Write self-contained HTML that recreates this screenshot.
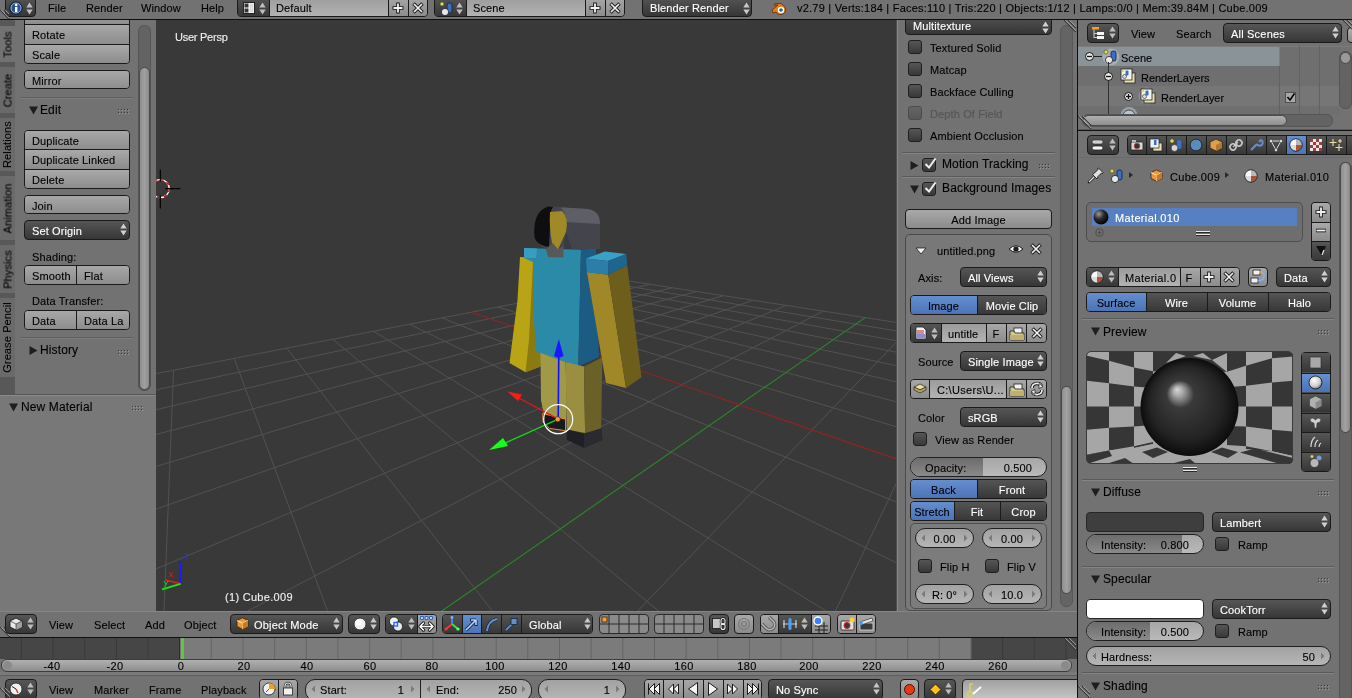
<!DOCTYPE html><html><head><meta charset="utf-8"><style>
*{margin:0;padding:0}
html,body{width:1352px;height:698px;overflow:hidden;background:#727272}
.a{position:absolute;box-sizing:border-box}
.t{position:absolute;font-family:"Liberation Sans",sans-serif;font-size:11px;line-height:11px;white-space:nowrap;-webkit-text-stroke:0.12px currentColor;will-change:transform;letter-spacing:0.12px}
svg{overflow:visible}
</style></head><body><div class="a" style="left:0;top:0;width:1352px;height:698px;clip-path:inset(20px 1196px 87px 0px)">
<div class="a" style="left:0px;top:20px;width:15px;height:375px;background:#585858"></div>
<div class="a" style="left:0px;top:26px;width:15px;height:36px;background:#727272;"></div>
<span class="t" style="left:-10.5px;top:38.5px;width:36px;text-align:center;transform:rotate(-90deg);color:#000">Tools</span>
<div class="a" style="left:0px;top:67px;width:15px;height:46px;background:#6a6a6a;"></div>
<span class="t" style="left:-15.5px;top:84.5px;width:46px;text-align:center;transform:rotate(-90deg);color:#000">Create</span>
<div class="a" style="left:0px;top:118px;width:15px;height:53px;background:#6a6a6a;"></div>
<span class="t" style="left:-19.0px;top:139.0px;width:53px;text-align:center;transform:rotate(-90deg);color:#000">Relations</span>
<div class="a" style="left:0px;top:176px;width:15px;height:64px;background:#6a6a6a;"></div>
<span class="t" style="left:-24.5px;top:202.5px;width:64px;text-align:center;transform:rotate(-90deg);color:#000">Animation</span>
<div class="a" style="left:0px;top:245px;width:15px;height:48px;background:#6a6a6a;"></div>
<span class="t" style="left:-16.5px;top:263.5px;width:48px;text-align:center;transform:rotate(-90deg);color:#000">Physics</span>
<div class="a" style="left:0px;top:298px;width:15px;height:79px;background:#6a6a6a;"></div>
<span class="t" style="left:-32.0px;top:332.0px;width:79px;text-align:center;transform:rotate(-90deg);color:#000">Grease Pencil</span>
<div class="a" style="left:15px;top:20px;width:141px;height:375px;background:#727272"></div>
<div class="a w" style="left:24px;top:14px;width:106px;height:11px;background:linear-gradient(#a9a9a9,#8b8b8b);border:1px solid #1a1a1a;border-radius:0px;border-top:none;"></div>
<div class="a w" style="left:24px;top:24px;width:106px;height:40px;border:1px solid #1a1a1a;border-radius:0 0 4px 4px;overflow:hidden;"><div class="a" style="left:-1px;top:-1px;width:106px;height:21px;background:linear-gradient(#a9a9a9,#8b8b8b);"></div><div class="a" style="left:-1px;top:19px;width:106px;height:20px;background:linear-gradient(#a9a9a9,#8b8b8b);border-top:1px solid #1a1a1a;"></div></div>
<span class="t" style="left:32px;top:30.0px;color:#000;font-size:11px;">Rotate</span>
<span class="t" style="left:32px;top:50.0px;color:#000;font-size:11px;">Scale</span>
<div class="a w" style="left:24px;top:70px;width:106px;height:19px;border:1px solid #1a1a1a;border-radius:4px 4px 4px 4px;overflow:hidden;"><div class="a" style="left:-1px;top:-1px;width:106px;height:20px;background:linear-gradient(#a9a9a9,#8b8b8b);"></div></div>
<span class="t" style="left:32px;top:75.5px;color:#000;font-size:11px;">Mirror</span>
<div class="a" style="left:21px;top:97px;width:112px;height:1px;background:#5e5e5e"></div>
<div class="a" style="left:21px;top:98px;width:112px;height:1px;background:#7c7c7c"></div>
<svg class="a" style="left:28.5px;top:105.5px;" width="9" height="9" viewBox="0 0 9 9"><path d="M0 0.5L9 0.5L4.5 8.5Z" fill="#1e1e1e"/></svg>
<span class="t" style="left:40px;top:105px;color:#000;font-size:12px;">Edit</span>
<svg class="a" style="left:118px;top:109px;" width="12" height="6" viewBox="0 0 12 6"><rect x="0" y="0" width="1" height="1" fill="#3a3a3a"/><rect x="1" y="1" width="1" height="1" fill="#9a9a9a"/><rect x="0" y="3" width="1" height="1" fill="#3a3a3a"/><rect x="1" y="4" width="1" height="1" fill="#9a9a9a"/><rect x="3" y="0" width="1" height="1" fill="#3a3a3a"/><rect x="4" y="1" width="1" height="1" fill="#9a9a9a"/><rect x="3" y="3" width="1" height="1" fill="#3a3a3a"/><rect x="4" y="4" width="1" height="1" fill="#9a9a9a"/><rect x="6" y="0" width="1" height="1" fill="#3a3a3a"/><rect x="7" y="1" width="1" height="1" fill="#9a9a9a"/><rect x="6" y="3" width="1" height="1" fill="#3a3a3a"/><rect x="7" y="4" width="1" height="1" fill="#9a9a9a"/><rect x="9" y="0" width="1" height="1" fill="#3a3a3a"/><rect x="10" y="1" width="1" height="1" fill="#9a9a9a"/><rect x="9" y="3" width="1" height="1" fill="#3a3a3a"/><rect x="10" y="4" width="1" height="1" fill="#9a9a9a"/></svg>
<div class="a w" style="left:24px;top:130px;width:106px;height:59px;border:1px solid #1a1a1a;border-radius:4px 4px 4px 4px;overflow:hidden;"><div class="a" style="left:-1px;top:-1px;width:106px;height:20px;background:linear-gradient(#a9a9a9,#8b8b8b);"></div><div class="a" style="left:-1px;top:18px;width:106px;height:20px;background:linear-gradient(#a9a9a9,#8b8b8b);border-top:1px solid #1a1a1a;"></div><div class="a" style="left:-1px;top:38px;width:106px;height:20px;background:linear-gradient(#a9a9a9,#8b8b8b);border-top:1px solid #1a1a1a;"></div></div>
<span class="t" style="left:32px;top:135.5px;color:#000;font-size:11px;">Duplicate</span>
<span class="t" style="left:32px;top:155.0px;color:#000;font-size:11px;">Duplicate Linked</span>
<span class="t" style="left:32px;top:175.0px;color:#000;font-size:11px;">Delete</span>
<div class="a w" style="left:24px;top:195px;width:106px;height:19px;border:1px solid #1a1a1a;border-radius:4px 4px 4px 4px;overflow:hidden;"><div class="a" style="left:-1px;top:-1px;width:106px;height:20px;background:linear-gradient(#a9a9a9,#8b8b8b);"></div></div>
<span class="t" style="left:32px;top:200.5px;color:#000;font-size:11px;">Join</span>
<div class="a w" style="left:24px;top:220px;width:106px;height:20px;background:linear-gradient(#565656,#363636);border:1px solid #1a1a1a;border-radius:4px;"></div>
<span class="t" style="left:32px;top:226px;color:#fff;font-size:11px;">Set Origin</span>
<svg class="a" style="left:120px;top:223px" width="7" height="14"><path d="M0.3 5.6L3.5 0.4L6.7 5.6Z M0.3 7.4L3.5 12.6L6.7 7.4Z" fill="#d0d0d0"/></svg>
<span class="t" style="left:32px;top:252px;color:#000;font-size:11px;">Shading:</span>
<div class="a w" style="left:24px;top:265px;width:106px;height:20px;border:1px solid #1a1a1a;border-radius:4px;overflow:hidden;"><div class="a" style="left:-1px;top:-1px;width:53px;height:20px;background:linear-gradient(#a9a9a9,#8b8b8b);box-sizing:border-box"></div><div class="a" style="left:51px;top:-1px;width:54px;height:20px;background:linear-gradient(#a9a9a9,#8b8b8b);border-left:1px solid #1a1a1a;box-sizing:border-box"></div></div>
<span class="t" style="left:32px;top:271px;color:#000;font-size:11px;">Smooth</span>
<span class="t" style="left:84px;top:271px;color:#000;font-size:11px;">Flat</span>
<span class="t" style="left:32px;top:296px;color:#000;font-size:11px;">Data Transfer:</span>
<div class="a w" style="left:24px;top:310px;width:106px;height:20px;border:1px solid #1a1a1a;border-radius:4px;overflow:hidden;"><div class="a" style="left:-1px;top:-1px;width:53px;height:20px;background:linear-gradient(#a9a9a9,#8b8b8b);box-sizing:border-box"></div><div class="a" style="left:51px;top:-1px;width:54px;height:20px;background:linear-gradient(#a9a9a9,#8b8b8b);border-left:1px solid #1a1a1a;box-sizing:border-box"></div></div>
<span class="t" style="left:32px;top:316px;color:#000;font-size:11px;">Data</span>
<span class="t" style="left:84px;top:316px;color:#000;font-size:11px;">Data La</span>
<div class="a" style="left:21px;top:337px;width:112px;height:1px;background:#5e5e5e"></div>
<div class="a" style="left:21px;top:338px;width:112px;height:1px;background:#7c7c7c"></div>
<svg class="a" style="left:28.5px;top:345.5px;" width="9" height="9" viewBox="0 0 9 9"><path d="M0.5 0L8.5 4.5L0.5 9Z" fill="#1e1e1e"/></svg>
<span class="t" style="left:40px;top:345px;color:#000;font-size:12px;">History</span>
<svg class="a" style="left:118px;top:350px;" width="12" height="6" viewBox="0 0 12 6"><rect x="0" y="0" width="1" height="1" fill="#3a3a3a"/><rect x="1" y="1" width="1" height="1" fill="#9a9a9a"/><rect x="0" y="3" width="1" height="1" fill="#3a3a3a"/><rect x="1" y="4" width="1" height="1" fill="#9a9a9a"/><rect x="3" y="0" width="1" height="1" fill="#3a3a3a"/><rect x="4" y="1" width="1" height="1" fill="#9a9a9a"/><rect x="3" y="3" width="1" height="1" fill="#3a3a3a"/><rect x="4" y="4" width="1" height="1" fill="#9a9a9a"/><rect x="6" y="0" width="1" height="1" fill="#3a3a3a"/><rect x="7" y="1" width="1" height="1" fill="#9a9a9a"/><rect x="6" y="3" width="1" height="1" fill="#3a3a3a"/><rect x="7" y="4" width="1" height="1" fill="#9a9a9a"/><rect x="9" y="0" width="1" height="1" fill="#3a3a3a"/><rect x="10" y="1" width="1" height="1" fill="#9a9a9a"/><rect x="9" y="3" width="1" height="1" fill="#3a3a3a"/><rect x="10" y="4" width="1" height="1" fill="#9a9a9a"/></svg>
<div class="a" style="left:138px;top:25px;width:13px;height:366px;background:#636363;border:1px solid #555;border-radius:6px"></div>
<div class="a" style="left:139px;top:67px;width:11px;height:323px;background:linear-gradient(90deg,#8e8e8e,#a0a0a0,#8a8a8a);border:1px solid #4a4a4a;border-radius:6px"></div>
<div class="a" style="left:0px;top:394px;width:156px;height:1px;background:#565656"></div>
<div class="a" style="left:0px;top:395px;width:156px;height:216px;background:#787878"></div>
<div class="a" style="left:0px;top:395px;width:156px;height:1px;background:#8a8a8a"></div>
<svg class="a" style="left:8.5px;top:402.5px;" width="9" height="9" viewBox="0 0 9 9"><path d="M0 0.5L9 0.5L4.5 8.5Z" fill="#1e1e1e"/></svg>
<span class="t" style="left:21px;top:402px;color:#000;font-size:12px;">New Material</span>
<svg class="a" style="left:132px;top:406px;" width="12" height="6" viewBox="0 0 12 6"><rect x="0" y="0" width="1" height="1" fill="#3a3a3a"/><rect x="1" y="1" width="1" height="1" fill="#9a9a9a"/><rect x="0" y="3" width="1" height="1" fill="#3a3a3a"/><rect x="1" y="4" width="1" height="1" fill="#9a9a9a"/><rect x="3" y="0" width="1" height="1" fill="#3a3a3a"/><rect x="4" y="1" width="1" height="1" fill="#9a9a9a"/><rect x="3" y="3" width="1" height="1" fill="#3a3a3a"/><rect x="4" y="4" width="1" height="1" fill="#9a9a9a"/><rect x="6" y="0" width="1" height="1" fill="#3a3a3a"/><rect x="7" y="1" width="1" height="1" fill="#9a9a9a"/><rect x="6" y="3" width="1" height="1" fill="#3a3a3a"/><rect x="7" y="4" width="1" height="1" fill="#9a9a9a"/><rect x="9" y="0" width="1" height="1" fill="#3a3a3a"/><rect x="10" y="1" width="1" height="1" fill="#9a9a9a"/><rect x="9" y="3" width="1" height="1" fill="#3a3a3a"/><rect x="10" y="4" width="1" height="1" fill="#9a9a9a"/></svg>
</div>
<div class="a" style="left:0;top:0;width:1352px;height:698px;clip-path:inset(20px 456px 87px 156px)">
<div class="a" style="left:156px;top:20px;width:740px;height:591px;background:#393939"></div>
<svg class="a" style="left:156px;top:20px;overflow:hidden" width="740" height="591"><line x1="1456.09" y1="413.29" x2="10692.92" y2="4061.46" stroke="#525252" stroke-width="1"/><line x1="1456.09" y1="413.29" x2="474.24" y2="261.25" stroke="#525252" stroke-width="1"/><line x1="1284.34" y1="386.69" x2="8739.0" y2="4080.15" stroke="#525252" stroke-width="1"/><line x1="1530.28" y1="442.59" x2="459.51" y2="264.12" stroke="#525252" stroke-width="1"/><line x1="1149.37" y1="365.79" x2="6785.09" y2="4098.83" stroke="#525252" stroke-width="1"/><line x1="1626.15" y1="480.46" x2="443.65" y2="267.21" stroke="#525252" stroke-width="1"/><line x1="1040.52" y1="348.94" x2="4831.17" y2="4117.51" stroke="#525252" stroke-width="1"/><line x1="1754.82" y1="531.28" x2="426.52" y2="270.55" stroke="#525252" stroke-width="1"/><line x1="950.86" y1="335.05" x2="2877.25" y2="4136.19" stroke="#525252" stroke-width="1"/><line x1="1936.6" y1="603.07" x2="407.98" y2="274.16" stroke="#525252" stroke-width="1"/><line x1="875.73" y1="323.42" x2="923.34" y2="4154.88" stroke="#525252" stroke-width="1"/><line x1="2212.91" y1="712.2" x2="387.83" y2="278.08" stroke="#525252" stroke-width="1"/><line x1="811.87" y1="313.53" x2="-1030.58" y2="4173.56" stroke="#525252" stroke-width="1"/><line x1="2683.43" y1="898.04" x2="365.86" y2="282.36" stroke="#525252" stroke-width="1"/><line x1="756.92" y1="305.02" x2="-703.53" y2="1822.38" stroke="#525252" stroke-width="1"/><line x1="3663.82" y1="1285.25" x2="341.82" y2="287.05" stroke="#525252" stroke-width="1"/><line x1="667.19" y1="291.13" x2="-228.74" y2="757.91" stroke="#525252" stroke-width="1"/><line x1="9592.57" y1="4071.98" x2="286.18" y2="297.88" stroke="#525252" stroke-width="1"/><line x1="630.09" y1="285.38" x2="-166.58" y2="618.54" stroke="#525252" stroke-width="1"/><line x1="7971.44" y1="4087.48" x2="253.76" y2="304.2" stroke="#525252" stroke-width="1"/><line x1="597.03" y1="280.26" x2="-128.97" y2="534.22" stroke="#525252" stroke-width="1"/><line x1="6350.32" y1="4102.99" x2="217.55" y2="311.25" stroke="#525252" stroke-width="1"/><line x1="567.39" y1="275.68" x2="-103.77" y2="477.71" stroke="#525252" stroke-width="1"/><line x1="4729.19" y1="4118.49" x2="176.85" y2="319.18" stroke="#525252" stroke-width="1"/><line x1="540.67" y1="271.54" x2="-85.7" y2="437.19" stroke="#525252" stroke-width="1"/><line x1="3108.07" y1="4133.99" x2="130.78" y2="328.15" stroke="#525252" stroke-width="1"/><line x1="516.45" y1="267.79" x2="-72.11" y2="406.73" stroke="#525252" stroke-width="1"/><line x1="1486.94" y1="4149.49" x2="78.18" y2="338.4" stroke="#525252" stroke-width="1"/><line x1="494.4" y1="264.37" x2="-61.52" y2="382.98" stroke="#525252" stroke-width="1"/><line x1="-134.18" y1="4164.99" x2="17.57" y2="350.21" stroke="#525252" stroke-width="1"/><line x1="474.24" y1="261.25" x2="-53.03" y2="363.96" stroke="#525252" stroke-width="1"/><line x1="-1755.3" y1="4180.49" x2="-53.03" y2="363.96" stroke="#525252" stroke-width="1"/><line x1="709.13" y1="297.62" x2="-351.13" y2="1032.3" stroke="#2a8a2a" stroke-width="1.1"/><line x1="6962.89" y1="2588.25" x2="315.38" y2="292.2" stroke="#9a2020" stroke-width="1.1"/></svg>
<svg class="a" style="left:156px;top:20px;overflow:hidden" width="740" height="591"><polygon points="364.0,237.0 380.0,238.0 385.0,332.0 384.4,346.5 369.5,352.2 353.5,343.0 361.5,280.0" fill="#b8a414" /><polygon points="377.0,242.0 385.0,242.0 385.6,332.7 384.4,346.5 369.5,352.2 373.0,320.0" fill="#8a7a10" /><polygon points="368.0,228.0 425.0,229.8 422.3,346.5 379.8,331.6 377.0,280.0 377.0,242.0 368.0,238.0" fill="#2a8aa8" /><polygon points="368.0,228.0 381.0,228.5 380.0,238.0 368.0,238.0" fill="#3a9cc0" /><polygon points="425.0,229.8 440.0,228.0 442.9,337.3 422.3,346.5" fill="#1c5c82" /><polygon points="384.4,332.7 409.6,341.9 410.8,385.4 409.6,410.0 387.9,394.6 385.0,380.0" fill="#a09a48" /><polygon points="409.6,341.9 428.0,346.5 429.1,413.0 410.8,409.5" fill="#9a8e40" /><polygon points="428.0,346.5 446.3,337.3 445.2,408.4 429.1,413.0" fill="#6a6028" /><polygon points="386.7,393.5 409.6,399.2 409.6,410.7 393.6,408.4 387.0,402.0" fill="#1a1a1e" stroke="#e8903a" stroke-width="1"/><polygon points="410.8,409.5 429.1,414.1 445.2,408.4 446.3,419.8 428.0,427.9 410.8,419.8" fill="#202024" /><polygon points="428.0,414.0 445.2,408.4 446.3,419.8 428.0,427.9" fill="#2a2a30" /><polygon points="431.0,252.0 452.3,254.8 470.0,368.0 450.0,363.0" fill="#a08828" /><polygon points="452.3,254.8 471.2,245.3 485.5,357.3 470.0,368.0" fill="#6e5e1c" /><polygon points="430.0,238.4 448.8,231.6 470.3,234.1 452.0,241.0" fill="#3aa0c8" /><polygon points="430.0,238.4 452.0,241.0 452.3,254.8 430.8,252.2" fill="#2a7ea8" /><polygon points="452.0,241.0 470.3,234.1 471.2,245.3 452.3,254.8" fill="#1e6690" /><path d="M378.5 218.0 Q376.0 192.0 392.0 186.5 L432.0 189.0 Q444.0 191.0 444.0 204.0 L444.0 229.0 L390.0 229.0 Q380.0 224.0 378.5 218.0Z" fill="#44444c"/><path d="M396.0 186.8 L432.0 189.0 Q444.0 191.0 444.0 204.0 L410.0 202.0 Q410.0 192.0 404.0 187.0Z" fill="#5e5e66"/><path d="M378.5 218.0 Q376.0 192.0 392.0 186.5 L397.0 187.0 Q393.0 192.0 394.0 206.0 L393.0 227.0 Q382.0 226.0 378.5 218.0Z" fill="#0e0e10"/><path d="M394.0 192.0 L406.0 191.0 Q413.0 198.0 410.0 212.0 L402.0 229.4 L396.0 223.0 Q393.0 206.0 394.0 192.0Z" fill="#a08a28"/><polygon points="390.0,229.0 396.5,223.0 402.0,229.4 407.5,226.0 407.5,237.6 392.0,237.0" fill="#585858" /><path d="M410.0 212.0 L416.0 229.0 L407.5 229.0Z" fill="#3a3a40"/><line x1="402.20000000000005" y1="399.2" x2="402.79999999999995" y2="332" stroke="#1010ff" stroke-width="1.6"/><path d="M402.79999999999995 319L407.5 336Q402.79999999999995 339 398 336Z" fill="#1818ff"/><line x1="402.20000000000005" y1="399.2" x2="361" y2="377" stroke="#e01818" stroke-width="1.4"/><path d="M351.5 371.5L366 374.5L362 381Z" fill="#ff1818"/><line x1="402.20000000000005" y1="399.2" x2="347" y2="424" stroke="#18d018" stroke-width="1.4"/><path d="M333 430L347 418L352 426Z" fill="#18ff18"/><circle cx="402.20000000000005" cy="399.2" r="14.5" fill="none" stroke="#ffffff" stroke-width="1.2"/><circle cx="401.70000000000005" cy="399.2" r="2.6" fill="#f0a040" stroke="#201000" stroke-width="0.6"/></svg>
<svg class="a" style="left:156px;top:20px;overflow:hidden" width="740" height="591"><g transform="translate(4.300000000000011,168.6)"><circle r="9" fill="none" stroke="#ffffff" stroke-width="1.3"/><circle r="9" fill="none" stroke="#e00000" stroke-width="1.3" stroke-dasharray="3.5 3.5"/><path d="M0 -19V-7M0 7V20M5 0H20" stroke="#000" stroke-width="1.2"/></g></svg>
<span class="t" style="left:175px;top:32px;color:#f0f0f0;font-size:11px;letter-spacing:-0.25px">User Persp</span>
<span class="t" style="left:225px;top:592px;color:#f0f0f0;font-size:11px;letter-spacing:0.3px">(1) Cube.009</span>
<svg class="a" style="left:150px;top:548px;" width="45" height="50" viewBox="0 0 45 50"><line x1="30.6" y1="35.8" x2="30.6" y2="13" stroke="#1a1aff" stroke-width="1.6"/><line x1="30.6" y1="35.8" x2="15.4" y2="32" stroke="#e02020" stroke-width="1.6"/><line x1="30.6" y1="35.8" x2="12" y2="41.4" stroke="#20e020" stroke-width="1.8"/><path d="M34 5.5H38L34 10H38" stroke="#2a2aff" stroke-width="1" fill="none"/><path d="M19 24L23 29M23 24L19 29" stroke="#d02020" stroke-width="1" fill="none"/><path d="M14 33L16 36.5M18 33L14.5 39" stroke="#20c020" stroke-width="1" fill="none"/></svg>
</div>
<div class="a" style="left:0;top:0;width:1352px;height:698px;clip-path:inset(20px 275px 87px 896px)">
<div class="a" style="left:896px;top:20px;width:181px;height:591px;background:#727272"></div>
<div class="a" style="left:896px;top:20px;width:1px;height:591px;background:#4e4e4e"></div>
<div class="a" style="left:897px;top:20px;width:1px;height:591px;background:#8a8a8a"></div>
<div class="a w" style="left:905px;top:13px;width:147px;height:22px;background:linear-gradient(#565656,#363636);border:1px solid #1a1a1a;border-radius:4px;"></div>
<span class="t" style="left:913px;top:21px;color:#fff;font-size:11px;">Multitexture</span>
<svg class="a" style="left:1042px;top:21px" width="7" height="14"><path d="M0.3 5.6L3.5 0.4L6.7 5.6Z M0.3 7.4L3.5 12.6L6.7 7.4Z" fill="#d0d0d0"/></svg>
<div class="a w" style="left:908px;top:40px;width:14px;height:14px;background:linear-gradient(#565656,#383838);border:1px solid #1e1e1e;border-radius:3px;"></div>
<span class="t" style="left:930px;top:43px;color:#000;font-size:11px;">Textured Solid</span>
<div class="a w" style="left:908px;top:62px;width:14px;height:14px;background:linear-gradient(#565656,#383838);border:1px solid #1e1e1e;border-radius:3px;"></div>
<span class="t" style="left:930px;top:65px;color:#000;font-size:11px;">Matcap</span>
<div class="a w" style="left:908px;top:84px;width:14px;height:14px;background:linear-gradient(#565656,#383838);border:1px solid #1e1e1e;border-radius:3px;"></div>
<span class="t" style="left:930px;top:87px;color:#000;font-size:11px;">Backface Culling</span>
<div class="a w" style="left:908px;top:106px;width:14px;height:14px;background:linear-gradient(#565656,#383838);border:1px solid #1e1e1e;border-radius:3px;opacity:0.45;"></div>
<span class="t" style="left:930px;top:109px;color:#555555;font-size:11px;">Depth Of Field</span>
<div class="a w" style="left:908px;top:128px;width:14px;height:14px;background:linear-gradient(#565656,#383838);border:1px solid #1e1e1e;border-radius:3px;"></div>
<span class="t" style="left:930px;top:131px;color:#000;font-size:11px;">Ambient Occlusion</span>
<div class="a" style="left:902px;top:152px;width:153px;height:1px;background:#5a5a5a"></div>
<div class="a" style="left:902px;top:153px;width:153px;height:1px;background:#858585"></div>
<svg class="a" style="left:909.5px;top:160.5px;" width="9" height="9" viewBox="0 0 9 9"><path d="M0.5 0L8.5 4.5L0.5 9Z" fill="#1e1e1e"/></svg>
<div class="a w" style="left:922px;top:158px;width:14px;height:14px;background:linear-gradient(#565656,#383838);border:1px solid #1e1e1e;border-radius:3px;"></div>
<svg class="a" style="left:923px;top:156px;" width="14" height="15" viewBox="0 0 14 15"><path d="M2.5 8L6 11.5L12.5 2.5" stroke="#f0f0f0" stroke-width="2" fill="none"/></svg>
<span class="t" style="left:942px;top:159px;color:#000;font-size:12px;">Motion Tracking</span>
<svg class="a" style="left:1039px;top:164px;" width="12" height="6" viewBox="0 0 12 6"><rect x="0" y="0" width="1" height="1" fill="#3a3a3a"/><rect x="1" y="1" width="1" height="1" fill="#9a9a9a"/><rect x="0" y="3" width="1" height="1" fill="#3a3a3a"/><rect x="1" y="4" width="1" height="1" fill="#9a9a9a"/><rect x="3" y="0" width="1" height="1" fill="#3a3a3a"/><rect x="4" y="1" width="1" height="1" fill="#9a9a9a"/><rect x="3" y="3" width="1" height="1" fill="#3a3a3a"/><rect x="4" y="4" width="1" height="1" fill="#9a9a9a"/><rect x="6" y="0" width="1" height="1" fill="#3a3a3a"/><rect x="7" y="1" width="1" height="1" fill="#9a9a9a"/><rect x="6" y="3" width="1" height="1" fill="#3a3a3a"/><rect x="7" y="4" width="1" height="1" fill="#9a9a9a"/><rect x="9" y="0" width="1" height="1" fill="#3a3a3a"/><rect x="10" y="1" width="1" height="1" fill="#9a9a9a"/><rect x="9" y="3" width="1" height="1" fill="#3a3a3a"/><rect x="10" y="4" width="1" height="1" fill="#9a9a9a"/></svg>
<div class="a" style="left:902px;top:176px;width:153px;height:1px;background:#5a5a5a"></div>
<div class="a" style="left:902px;top:177px;width:153px;height:1px;background:#858585"></div>
<svg class="a" style="left:909.5px;top:184.5px;" width="9" height="9" viewBox="0 0 9 9"><path d="M0 0.5L9 0.5L4.5 8.5Z" fill="#1e1e1e"/></svg>
<div class="a w" style="left:922px;top:182px;width:14px;height:14px;background:linear-gradient(#565656,#383838);border:1px solid #1e1e1e;border-radius:3px;"></div>
<svg class="a" style="left:923px;top:180px;" width="14" height="15" viewBox="0 0 14 15"><path d="M2.5 8L6 11.5L12.5 2.5" stroke="#f0f0f0" stroke-width="2" fill="none"/></svg>
<span class="t" style="left:942px;top:183px;color:#000;font-size:12px;letter-spacing:0.15px">Background Images</span>
<div class="a w" style="left:905px;top:209px;width:147px;height:20px;background:linear-gradient(#a9a9a9,#8b8b8b);border:1px solid #1a1a1a;border-radius:4px;"></div>
<span class="t" style="left:905px;top:215px;width:147px;text-align:center;color:#000;font-size:11px;">Add Image</span>
<div class="a" style="left:905px;top:234px;width:147px;height:377px;background:#787878;border:1px solid #4a4a4a;border-radius:5px"></div>
<svg class="a" style="left:915px;top:247px;" width="12" height="8" viewBox="0 0 12 8"><path d="M1 1H11L6 7Z" fill="#f0f0f0" stroke="#202020" stroke-width="0.8"/></svg>
<span class="t" style="left:937px;top:246px;color:#000;font-size:11px;">untitled.png</span>
<svg class="a" style="left:1008px;top:244px;" width="16" height="10" viewBox="0 0 16 10"><path d="M1 5Q8 -1.5 15 5Q8 11.5 1 5Z" fill="#f4f4f4" stroke="#1a1a1a" stroke-width="1"/><circle cx="8" cy="5" r="2.6" fill="#1a1a1a"/></svg>
<svg class="a" style="left:1026px;top:241px;" width="20" height="16" viewBox="0 0 20 16"><path d="M5.5 3.5L14.5 12.5M14.5 3.5L5.5 12.5" stroke="#1a1a1a" stroke-width="3.4"/><path d="M6.0 4.0L14.0 12.0M14.0 4.0L6.0 12.0" stroke="#f2f2f2" stroke-width="1.7"/></svg>
<span class="t" style="left:918px;top:273px;color:#000;font-size:11px;">Axis:</span>
<div class="a w" style="left:960px;top:267px;width:87px;height:20px;background:linear-gradient(#565656,#363636);border:1px solid #1a1a1a;border-radius:4px;"></div>
<span class="t" style="left:968px;top:273px;color:#fff;font-size:11px;">All Views</span>
<svg class="a" style="left:1037px;top:270px" width="7" height="14"><path d="M0.3 5.6L3.5 0.4L6.7 5.6Z M0.3 7.4L3.5 12.6L6.7 7.4Z" fill="#d0d0d0"/></svg>
<div class="a w" style="left:910px;top:295px;width:137px;height:20px;border:1px solid #1a1a1a;border-radius:4px;overflow:hidden;"><div class="a" style="left:-1px;top:-1px;width:68px;height:20px;background:linear-gradient(#6690d2,#4a72b4);box-sizing:border-box"></div><div class="a" style="left:66px;top:-1px;width:70px;height:20px;background:linear-gradient(#565656,#363636);border-left:1px solid #1a1a1a;box-sizing:border-box"></div></div>
<span class="t" style="left:910px;top:301px;width:67px;text-align:center;color:#000;font-size:11px;">Image</span>
<span class="t" style="left:977px;top:301px;width:70px;text-align:center;color:#fff;font-size:11px;">Movie Clip</span>
<div class="a w" style="left:910px;top:323px;width:137px;height:20px;border:1px solid #1a1a1a;border-radius:4px;overflow:hidden;"><div class="a" style="left:-1px;top:-1px;width:32px;height:20px;background:linear-gradient(#565656,#363636);box-sizing:border-box"></div><div class="a" style="left:30px;top:-1px;width:45px;height:20px;background:linear-gradient(#9a9a9a,#b4b4b4);border-left:1px solid #1a1a1a;box-sizing:border-box"></div><div class="a" style="left:75px;top:-1px;width:20px;height:20px;background:linear-gradient(#a9a9a9,#8b8b8b);border-left:1px solid #1a1a1a;box-sizing:border-box"></div><div class="a" style="left:95px;top:-1px;width:20px;height:20px;background:linear-gradient(#a9a9a9,#8b8b8b);border-left:1px solid #1a1a1a;box-sizing:border-box"></div><div class="a" style="left:115px;top:-1px;width:21px;height:20px;background:linear-gradient(#a9a9a9,#8b8b8b);border-left:1px solid #1a1a1a;box-sizing:border-box"></div></div>
<svg class="a" style="left:915px;top:326px;" width="12" height="14" viewBox="0 0 12 14"><path d="M1 1H8L11 4V13H1Z" fill="#f4f4f4" stroke="#222" stroke-width="0.8"/><rect x="2" y="4" width="7" height="4" fill="#d88a8a"/><rect x="2" y="8" width="8" height="4" fill="#8a8ad8"/></svg>
<svg class="a" style="left:931px;top:327px" width="7" height="14"><path d="M0.3 5.6L3.5 0.4L6.7 5.6Z M0.3 7.4L3.5 12.6L6.7 7.4Z" fill="#bdbdbd"/></svg>
<span class="t" style="left:948px;top:329px;color:#000;font-size:11px;">untitle</span>
<span class="t" style="left:986px;top:329px;width:20px;text-align:center;color:#000;font-size:11px;">F</span>
<svg class="a" style="left:1009px;top:327px;" width="16" height="14" viewBox="0 0 16 14"><rect x="5" y="1" width="8" height="7" fill="#f4f4f4" stroke="#222" stroke-width="0.8"/><path d="M1 4H5L6 6H15V13H1Z" fill="#d8c888" stroke="#222" stroke-width="0.8"/><path d="M1 8H15V13H1Z" fill="#c0b070"/></svg>
<svg class="a" style="left:1027px;top:325px;" width="20" height="16" viewBox="0 0 20 16"><path d="M5.5 3.5L14.5 12.5M14.5 3.5L5.5 12.5" stroke="#1a1a1a" stroke-width="3.4"/><path d="M6.0 4.0L14.0 12.0M14.0 4.0L6.0 12.0" stroke="#f2f2f2" stroke-width="1.7"/></svg>
<span class="t" style="left:918px;top:357px;color:#000;font-size:11px;">Source</span>
<div class="a w" style="left:960px;top:351px;width:87px;height:20px;background:linear-gradient(#565656,#363636);border:1px solid #1a1a1a;border-radius:4px;"></div>
<span class="t" style="left:968px;top:357px;color:#fff;font-size:11px;">Single Image</span>
<svg class="a" style="left:1037px;top:354px" width="7" height="14"><path d="M0.3 5.6L3.5 0.4L6.7 5.6Z M0.3 7.4L3.5 12.6L6.7 7.4Z" fill="#d0d0d0"/></svg>
<div class="a w" style="left:910px;top:379px;width:137px;height:20px;border:1px solid #1a1a1a;border-radius:4px;overflow:hidden;"><div class="a" style="left:-1px;top:-1px;width:20px;height:20px;background:linear-gradient(#a9a9a9,#8b8b8b);box-sizing:border-box"></div><div class="a" style="left:18px;top:-1px;width:77px;height:20px;background:linear-gradient(#9a9a9a,#b4b4b4);border-left:1px solid #1a1a1a;box-sizing:border-box"></div><div class="a" style="left:95px;top:-1px;width:20px;height:20px;background:linear-gradient(#a9a9a9,#8b8b8b);border-left:1px solid #1a1a1a;box-sizing:border-box"></div><div class="a" style="left:115px;top:-1px;width:21px;height:20px;background:linear-gradient(#a9a9a9,#8b8b8b);border-left:1px solid #1a1a1a;box-sizing:border-box"></div></div>
<svg class="a" style="left:913px;top:383px;" width="14" height="11" viewBox="0 0 14 11"><path d="M1 4L7 1L13 4L7 7Z" fill="#e8dca0" stroke="#222" stroke-width="0.7"/><path d="M1 4V7L7 10L13 7V4L7 7Z" fill="#b8a860" stroke="#222" stroke-width="0.7"/></svg>
<span class="t" style="left:937px;top:385px;color:#000;font-size:11px;letter-spacing:0.3px">C:\Users\U...</span>
<svg class="a" style="left:1009px;top:383px;" width="16" height="14" viewBox="0 0 16 14"><rect x="5" y="1" width="8" height="7" fill="#f4f4f4" stroke="#222" stroke-width="0.8"/><path d="M1 4H5L6 6H15V13H1Z" fill="#d8c888" stroke="#222" stroke-width="0.8"/><path d="M1 8H15V13H1Z" fill="#c0b070"/></svg>
<svg class="a" style="left:1029px;top:381px;" width="16" height="16" viewBox="0 0 16 16"><path d="M3 7A5 4.5 0 0 1 12.5 5M13 9A5 4.5 0 0 1 3.5 11" stroke="#1a1a1a" stroke-width="3.4" fill="none"/><path d="M3 7A5 4.5 0 0 1 12.5 5M13 9A5 4.5 0 0 1 3.5 11" stroke="#f4f4f4" stroke-width="1.6" fill="none"/><path d="M10 2.5L14 5.5L10 7.5Z M6 8.5L2 10.5L6 13.5Z" fill="#f4f4f4" stroke="#1a1a1a" stroke-width="0.7"/></svg>
<span class="t" style="left:918px;top:413px;color:#000;font-size:11px;">Color</span>
<div class="a w" style="left:960px;top:407px;width:87px;height:20px;background:linear-gradient(#565656,#363636);border:1px solid #1a1a1a;border-radius:4px;"></div>
<span class="t" style="left:968px;top:413px;color:#fff;font-size:11px;">sRGB</span>
<svg class="a" style="left:1037px;top:410px" width="7" height="14"><path d="M0.3 5.6L3.5 0.4L6.7 5.6Z M0.3 7.4L3.5 12.6L6.7 7.4Z" fill="#d0d0d0"/></svg>
<div class="a w" style="left:913px;top:432px;width:14px;height:14px;background:linear-gradient(#565656,#383838);border:1px solid #1e1e1e;border-radius:3px;"></div>
<span class="t" style="left:935px;top:435px;color:#000;font-size:11px;">View as Render</span>
<div class="a w" style="left:910px;top:457px;width:137px;height:20px;background:linear-gradient(#a6a6a6,#bababa);border:1px solid #202020;border-radius:10.0px;overflow:hidden"><div class="a" style="left:0;top:0;width:72px;height:100%;background:linear-gradient(#6c6c6c,#8a8a8a)"></div></div>
<span class="t" style="left:925.0px;top:462.5px;color:#000;font-size:11px;">Opacity:</span>
<span class="t" style="left:732.0px;top:462.5px;width:300px;text-align:right;color:#000;font-size:11px;">0.500</span>
<div class="a w" style="left:910px;top:479px;width:137px;height:20px;border:1px solid #1a1a1a;border-radius:4px;overflow:hidden;"><div class="a" style="left:-1px;top:-1px;width:68px;height:20px;background:linear-gradient(#6690d2,#4a72b4);box-sizing:border-box"></div><div class="a" style="left:66px;top:-1px;width:70px;height:20px;background:linear-gradient(#565656,#363636);border-left:1px solid #1a1a1a;box-sizing:border-box"></div></div>
<span class="t" style="left:910px;top:485px;width:67px;text-align:center;color:#000;font-size:11px;">Back</span>
<span class="t" style="left:977px;top:485px;width:70px;text-align:center;color:#fff;font-size:11px;">Front</span>
<div class="a w" style="left:910px;top:501px;width:137px;height:20px;border:1px solid #1a1a1a;border-radius:4px;overflow:hidden;"><div class="a" style="left:-1px;top:-1px;width:45px;height:20px;background:linear-gradient(#6690d2,#4a72b4);box-sizing:border-box"></div><div class="a" style="left:43px;top:-1px;width:46px;height:20px;background:linear-gradient(#565656,#363636);border-left:1px solid #1a1a1a;box-sizing:border-box"></div><div class="a" style="left:89px;top:-1px;width:47px;height:20px;background:linear-gradient(#565656,#363636);border-left:1px solid #1a1a1a;box-sizing:border-box"></div></div>
<span class="t" style="left:910px;top:507px;width:44px;text-align:center;color:#000;font-size:11px;">Stretch</span>
<span class="t" style="left:954px;top:507px;width:46px;text-align:center;color:#fff;font-size:11px;">Fit</span>
<span class="t" style="left:1000px;top:507px;width:47px;text-align:center;color:#fff;font-size:11px;">Crop</span>
<div class="a" style="left:910px;top:523px;width:137px;height:86px;background:#7c7c7c;border:1px solid #4e4e4e;border-radius:5px"></div>
<div class="a w" style="left:915px;top:528px;width:59px;height:20px;background:linear-gradient(#a2a2a2,#b6b6b6);border:1px solid #202020;border-radius:10.0px"></div>
<svg class="a" style="left:921px;top:534px;" width="5" height="8" viewBox="0 0 5 8"><path d="M4 0.5L0.5 4L4 7.5Z" fill="#7a7a7a"/></svg>
<svg class="a" style="left:963px;top:534px;" width="5" height="8" viewBox="0 0 5 8"><path d="M1 0.5L4.5 4L1 7.5Z" fill="#7a7a7a"/></svg>
<span class="t" style="left:915px;top:533.5px;width:59px;text-align:center;color:#000;font-size:11px;">0.00</span>
<div class="a w" style="left:982px;top:528px;width:60px;height:20px;background:linear-gradient(#a2a2a2,#b6b6b6);border:1px solid #202020;border-radius:10.0px"></div>
<svg class="a" style="left:988px;top:534px;" width="5" height="8" viewBox="0 0 5 8"><path d="M4 0.5L0.5 4L4 7.5Z" fill="#7a7a7a"/></svg>
<svg class="a" style="left:1031px;top:534px;" width="5" height="8" viewBox="0 0 5 8"><path d="M1 0.5L4.5 4L1 7.5Z" fill="#7a7a7a"/></svg>
<span class="t" style="left:982px;top:533.5px;width:60px;text-align:center;color:#000;font-size:11px;">0.00</span>
<div class="a w" style="left:918px;top:559px;width:14px;height:14px;background:linear-gradient(#565656,#383838);border:1px solid #1e1e1e;border-radius:3px;"></div>
<span class="t" style="left:940px;top:562px;color:#000;font-size:11px;">Flip H</span>
<div class="a w" style="left:985px;top:559px;width:14px;height:14px;background:linear-gradient(#565656,#383838);border:1px solid #1e1e1e;border-radius:3px;"></div>
<span class="t" style="left:1007px;top:562px;color:#000;font-size:11px;">Flip V</span>
<div class="a w" style="left:915px;top:584px;width:59px;height:20px;background:linear-gradient(#a2a2a2,#b6b6b6);border:1px solid #202020;border-radius:10.0px"></div>
<svg class="a" style="left:921px;top:590px;" width="5" height="8" viewBox="0 0 5 8"><path d="M4 0.5L0.5 4L4 7.5Z" fill="#7a7a7a"/></svg>
<svg class="a" style="left:963px;top:590px;" width="5" height="8" viewBox="0 0 5 8"><path d="M1 0.5L4.5 4L1 7.5Z" fill="#7a7a7a"/></svg>
<span class="t" style="left:915px;top:589.5px;width:59px;text-align:center;color:#000;font-size:11px;">R: 0°</span>
<div class="a w" style="left:982px;top:584px;width:60px;height:20px;background:linear-gradient(#a2a2a2,#b6b6b6);border:1px solid #202020;border-radius:10.0px"></div>
<svg class="a" style="left:988px;top:590px;" width="5" height="8" viewBox="0 0 5 8"><path d="M4 0.5L0.5 4L4 7.5Z" fill="#7a7a7a"/></svg>
<svg class="a" style="left:1031px;top:590px;" width="5" height="8" viewBox="0 0 5 8"><path d="M1 0.5L4.5 4L1 7.5Z" fill="#7a7a7a"/></svg>
<span class="t" style="left:982px;top:589.5px;width:60px;text-align:center;color:#000;font-size:11px;">10.0</span>
<div class="a" style="left:1060px;top:25px;width:13px;height:582px;background:#646464;border:1px solid #585858;border-radius:6px"></div>
<div class="a" style="left:1061px;top:386px;width:11px;height:208px;background:linear-gradient(90deg,#8e8e8e,#a2a2a2,#8a8a8a);border:1px solid #4a4a4a;border-radius:6px"></div>
<svg class="a" style="left:1064px;top:20px;" width="12" height="12" viewBox="0 0 12 12"><line x1="0" y1="0" x2="12" y2="12" stroke="#3a3a3a" stroke-width="1.2"/><line x1="1.2" y1="0" x2="12" y2="10.8" stroke="#a8a8a8" stroke-width="1"/><line x1="4" y1="0" x2="12" y2="8" stroke="#3a3a3a" stroke-width="1.2"/><line x1="5.2" y1="0" x2="12" y2="6.8" stroke="#a8a8a8" stroke-width="1"/></svg>
</div>
<div class="a" style="left:0;top:0;width:1352px;height:698px;clip-path:inset(611px 275px 60px 0px)">
<div class="a" style="left:0px;top:611px;width:1077px;height:26px;background:#727272"></div>
<div class="a" style="left:0px;top:611px;width:1077px;height:1px;background:#868686"></div>
<div class="a" style="left:0px;top:637px;width:1077px;height:1px;background:#101010"></div>
<svg class="a" style="left:0px;top:627px;" width="10" height="10" viewBox="0 0 10 10"><line x1="0" y1="0" x2="10" y2="10" stroke="#3a3a3a" stroke-width="1.2"/><line x1="1.2" y1="0" x2="10" y2="8.8" stroke="#a8a8a8" stroke-width="1"/><line x1="4" y1="0" x2="10" y2="6" stroke="#3a3a3a" stroke-width="1.2"/><line x1="5.2" y1="0" x2="10" y2="4.8" stroke="#a8a8a8" stroke-width="1"/></svg>
<div class="a w" style="left:5px;top:614px;width:32px;height:20px;background:linear-gradient(#565656,#363636);border:1px solid #1a1a1a;border-radius:4px;"></div>
<svg class="a" style="left:9px;top:617px;" width="14" height="14" viewBox="0 0 14 14"><path d="M7 1L13 4V10L7 13L1 10V4Z" fill="#e8e8e8" stroke="#1a1a1a" stroke-width="0.9"/><path d="M7 7L13 4V10L7 13Z" fill="#a0a0a0"/><path d="M1 4L7 7L13 4M7 7V13" stroke="#1a1a1a" stroke-width="0.6" fill="none"/></svg>
<svg class="a" style="left:27px;top:617px" width="7" height="14"><path d="M0.3 5.6L3.5 0.4L6.7 5.6Z M0.3 7.4L3.5 12.6L6.7 7.4Z" fill="#bdbdbd"/></svg>
<span class="t" style="left:49px;top:620px;color:#000;font-size:11px;">View</span>
<span class="t" style="left:94px;top:620px;color:#000;font-size:11px;">Select</span>
<span class="t" style="left:145px;top:620px;color:#000;font-size:11px;">Add</span>
<span class="t" style="left:184px;top:620px;color:#000;font-size:11px;">Object</span>
<div class="a w" style="left:230px;top:614px;width:113px;height:20px;background:linear-gradient(#565656,#363636);border:1px solid #1a1a1a;border-radius:4px;"></div>
<svg class="a" style="left:236px;top:617px;" width="13" height="13" viewBox="0 0 13 13"><path d="M6.5 0.8L12 3.5V9.5L6.5 12.2L1 9.5V3.5Z" fill="#e89a3a" stroke="#3a2000" stroke-width="0.8"/><path d="M1 3.5L6.5 6.2L12 3.5" fill="none" stroke="#fff2d0" stroke-width="0.9"/><path d="M6.5 6.2V12.2" stroke="#fff2d0" stroke-width="0.9"/><path d="M6.5 6.2L12 3.5V9.5L6.5 12.2Z" fill="#c87a20"/></svg>
<span class="t" style="left:254px;top:620px;color:#fff;font-size:11px;letter-spacing:0.2px">Object Mode</span>
<svg class="a" style="left:333px;top:617px" width="7" height="14"><path d="M0.3 5.6L3.5 0.4L6.7 5.6Z M0.3 7.4L3.5 12.6L6.7 7.4Z" fill="#c8c8c8"/></svg>
<div class="a w" style="left:348px;top:614px;width:32px;height:20px;background:linear-gradient(#565656,#363636);border:1px solid #1a1a1a;border-radius:4px;"></div>
<svg class="a" style="left:353px;top:617px;" width="14" height="14" viewBox="0 0 14 14"><circle cx="7" cy="7" r="6" fill="#f0f0f0" stroke="#222" stroke-width="0.8"/><circle cx="5.5" cy="5.5" r="3" fill="#fff"/></svg>
<svg class="a" style="left:370px;top:617px" width="7" height="14"><path d="M0.3 5.6L3.5 0.4L6.7 5.6Z M0.3 7.4L3.5 12.6L6.7 7.4Z" fill="#c8c8c8"/></svg>
<div class="a w" style="left:385px;top:614px;width:52px;height:20px;border:1px solid #1a1a1a;border-radius:4px;overflow:hidden;"><div class="a" style="left:-1px;top:-1px;width:33px;height:20px;background:linear-gradient(#565656,#363636);box-sizing:border-box"></div><div class="a" style="left:31px;top:-1px;width:20px;height:20px;background:linear-gradient(#a9a9a9,#8b8b8b);border-left:1px solid #1a1a1a;box-sizing:border-box"></div></div>
<svg class="a" style="left:388px;top:616px;" width="16" height="16" viewBox="0 0 16 16"><circle cx="6" cy="5.5" r="4.6" fill="#f0f0f0" stroke="#1a1a1a" stroke-width="0.9"/><circle cx="10" cy="10.5" r="4.6" fill="#e8e8e8" stroke="#1a1a1a" stroke-width="0.9"/><rect x="6" y="6.5" width="3.5" height="3.5" fill="#f0f0f0" stroke="#2060ff" stroke-width="1.3"/></svg>
<svg class="a" style="left:408px;top:617px" width="7" height="14"><path d="M0.3 5.6L3.5 0.4L6.7 5.6Z M0.3 7.4L3.5 12.6L6.7 7.4Z" fill="#bdbdbd"/></svg>
<svg class="a" style="left:418px;top:615px;" width="17" height="18" viewBox="0 0 17 18"><circle cx="4" cy="3" r="1.6" fill="#f0f0f0" stroke="#2060d0" stroke-width="1.1"/><circle cx="8.5" cy="3" r="1.6" fill="#f0f0f0" stroke="#2060d0" stroke-width="1.1"/><circle cx="13" cy="3" r="1.6" fill="#f0f0f0" stroke="#2060d0" stroke-width="1.1"/><path d="M2 11.5H15M2 11.5L5.5 8M2 11.5L5.5 15M15 11.5L11.5 8M15 11.5L11.5 15" stroke="#1a1a1a" stroke-width="3.2" fill="none" stroke-linecap="round"/><path d="M2 11.5H15M2 11.5L5.5 8M2 11.5L5.5 15M15 11.5L11.5 8M15 11.5L11.5 15" stroke="#ffffff" stroke-width="1.5" fill="none" stroke-linecap="round"/></svg>
<div class="a w" style="left:442px;top:614px;width:151px;height:20px;border:1px solid #1a1a1a;border-radius:4px;overflow:hidden;"><div class="a" style="left:-1px;top:-1px;width:21px;height:20px;background:linear-gradient(#565656,#363636);box-sizing:border-box"></div><div class="a" style="left:19px;top:-1px;width:19px;height:20px;background:linear-gradient(#6690d2,#4a72b4);border-left:1px solid #1a1a1a;box-sizing:border-box"></div><div class="a" style="left:38px;top:-1px;width:20px;height:20px;background:linear-gradient(#565656,#363636);border-left:1px solid #1a1a1a;box-sizing:border-box"></div><div class="a" style="left:58px;top:-1px;width:20px;height:20px;background:linear-gradient(#565656,#363636);border-left:1px solid #1a1a1a;box-sizing:border-box"></div><div class="a" style="left:78px;top:-1px;width:72px;height:20px;background:linear-gradient(#565656,#363636);border-left:1px solid #1a1a1a;box-sizing:border-box"></div></div>
<svg class="a" style="left:444px;top:616px;" width="16" height="16" viewBox="0 0 16 16"><path d="M8 8V1" stroke="#4080ff" stroke-width="2"/><path d="M8 8L2 13" stroke="#ff3030" stroke-width="2"/><path d="M8 8L14 13" stroke="#40e040" stroke-width="2"/><circle cx="2" cy="13" r="1.6" fill="#ff3030"/><circle cx="14" cy="13" r="1.6" fill="#60ff60"/><circle cx="8" cy="1.5" r="1.4" fill="#80b0ff"/></svg>
<svg class="a" style="left:464px;top:617px;" width="15" height="15" viewBox="0 0 15 15"><path d="M2 13L12 3M12 3H6M12 3V9" stroke="#1a2a4a" stroke-width="3.2" fill="none"/><path d="M2 13L12 3M12 3H7M12 3V8" stroke="#b8d4ff" stroke-width="1.6" fill="none"/></svg>
<svg class="a" style="left:484px;top:617px;" width="15" height="15" viewBox="0 0 15 15"><path d="M3 14Q4 4 13 2" stroke="#1a2a4a" stroke-width="3.4" fill="none"/><path d="M3 14Q4 4 13 2" stroke="#6a8cc8" stroke-width="2" fill="none"/></svg>
<svg class="a" style="left:504px;top:617px;" width="15" height="15" viewBox="0 0 15 15"><path d="M2 13L9 6" stroke="#1a2a4a" stroke-width="3.2"/><path d="M2 13L9 6" stroke="#6a8cc8" stroke-width="1.8"/><rect x="7" y="1.5" width="6" height="6" fill="#6a8cc8" stroke="#1a2a4a" stroke-width="0.9"/></svg>
<span class="t" style="left:529px;top:620px;color:#fff;font-size:11px;">Global</span>
<svg class="a" style="left:584px;top:617px" width="7" height="14"><path d="M0.3 5.6L3.5 0.4L6.7 5.6Z M0.3 7.4L3.5 12.6L6.7 7.4Z" fill="#c8c8c8"/></svg>
<div class="a w" style="left:599px;top:614px;width:50px;height:20px;background:#8a8a8a;border:1px solid #2a2a2a;border-radius:4px;overflow:hidden"></div>
<svg class="a" style="left:599px;top:614px;" width="50" height="20" viewBox="0 0 50 20"><line x1="10" y1="0" x2="10" y2="20" stroke="#2a2a2a" stroke-width="1"/><line x1="20" y1="0" x2="20" y2="20" stroke="#2a2a2a" stroke-width="1"/><line x1="30" y1="0" x2="30" y2="20" stroke="#2a2a2a" stroke-width="1"/><line x1="40" y1="0" x2="40" y2="20" stroke="#2a2a2a" stroke-width="1"/><line x1="0" y1="10" x2="50" y2="10" stroke="#2a2a2a" stroke-width="1"/><rect x="3" y="3" width="5" height="5" fill="#f0a030" stroke="#3a2000" stroke-width="0.8"/></svg>
<div class="a w" style="left:654px;top:614px;width:50px;height:20px;background:#8a8a8a;border:1px solid #2a2a2a;border-radius:4px;overflow:hidden"></div>
<svg class="a" style="left:654px;top:614px;" width="50" height="20" viewBox="0 0 50 20"><line x1="10" y1="0" x2="10" y2="20" stroke="#2a2a2a" stroke-width="1"/><line x1="20" y1="0" x2="20" y2="20" stroke="#2a2a2a" stroke-width="1"/><line x1="30" y1="0" x2="30" y2="20" stroke="#2a2a2a" stroke-width="1"/><line x1="40" y1="0" x2="40" y2="20" stroke="#2a2a2a" stroke-width="1"/><line x1="0" y1="10" x2="50" y2="10" stroke="#2a2a2a" stroke-width="1"/></svg>
<div class="a w" style="left:709px;top:614px;width:20px;height:20px;background:linear-gradient(#565656,#363636);border:1px solid #1a1a1a;border-radius:4px;"></div>
<svg class="a" style="left:711px;top:616px;" width="16" height="16" viewBox="0 0 16 16"><rect x="1.5" y="2.5" width="9" height="10" fill="#c8c8c8" stroke="#1a1a1a" stroke-width="0.8"/><rect x="10" y="2.5" width="4" height="6" rx="2" fill="none" stroke="#1a1a1a" stroke-width="2.4"/><rect x="10" y="7.5" width="4" height="6" rx="2" fill="none" stroke="#1a1a1a" stroke-width="2.4"/><rect x="10" y="2.5" width="4" height="6" rx="2" fill="none" stroke="#f0f0f0" stroke-width="1.1"/><rect x="10" y="7.5" width="4" height="6" rx="2" fill="none" stroke="#f0f0f0" stroke-width="1.1"/></svg>
<div class="a w" style="left:734px;top:614px;width:20px;height:20px;background:linear-gradient(#a9a9a9,#8b8b8b);border:1px solid #1a1a1a;border-radius:4px;"></div>
<svg class="a" style="left:737px;top:617px;" width="14" height="14" viewBox="0 0 14 14"><circle cx="7" cy="7" r="5.5" fill="none" stroke="#7a7a7a" stroke-width="1.2"/><circle cx="7" cy="7" r="2.5" fill="none" stroke="#7a7a7a" stroke-width="1.2"/></svg>
<div class="a w" style="left:760px;top:614px;width:71px;height:20px;border:1px solid #1a1a1a;border-radius:4px;overflow:hidden;"><div class="a" style="left:-1px;top:-1px;width:19px;height:20px;background:linear-gradient(#a9a9a9,#8b8b8b);box-sizing:border-box"></div><div class="a" style="left:17px;top:-1px;width:33px;height:20px;background:linear-gradient(#565656,#363636);border-left:1px solid #1a1a1a;box-sizing:border-box"></div><div class="a" style="left:50px;top:-1px;width:20px;height:20px;background:linear-gradient(#a9a9a9,#8b8b8b);border-left:1px solid #1a1a1a;box-sizing:border-box"></div></div>
<svg class="a" style="left:761px;top:616px;" width="16" height="16" viewBox="0 0 16 16"><g transform="rotate(-45 8 8)"><path d="M3 3V9A5 5 0 0 0 13 9V3" fill="none" stroke="#5a5a5a" stroke-width="3.4"/><path d="M3 3V9A5 5 0 0 0 13 9V3" fill="none" stroke="#b8b8b8" stroke-width="1.4"/></g></svg>
<svg class="a" style="left:781px;top:617px;" width="18" height="14" viewBox="0 0 18 14"><path d="M2 7H16" stroke="#c8c8c8" stroke-width="1"/><path d="M3 3V11M15 3V11" stroke="#e8e8e8" stroke-width="1"/><rect x="7.5" y="1" width="3" height="12" rx="1.5" fill="#4aa0ff"/></svg>
<svg class="a" style="left:801px;top:617px" width="7" height="14"><path d="M0.3 5.6L3.5 0.4L6.7 5.6Z M0.3 7.4L3.5 12.6L6.7 7.4Z" fill="#bdbdbd"/></svg>
<svg class="a" style="left:812px;top:616px;" width="17" height="17" viewBox="0 0 17 17"><path d="M3 10H16M3 14H16M7 6V17M12 6V17" stroke="#202020" stroke-width="1"/><circle cx="6" cy="5" r="4" fill="#3a80ff" stroke="#fff" stroke-width="1.4"/></svg>
<div class="a w" style="left:837px;top:614px;width:39px;height:20px;border:1px solid #1a1a1a;border-radius:4px;overflow:hidden;"><div class="a" style="left:-1px;top:-1px;width:20px;height:20px;background:linear-gradient(#a9a9a9,#8b8b8b);box-sizing:border-box"></div><div class="a" style="left:18px;top:-1px;width:20px;height:20px;background:linear-gradient(#a9a9a9,#8b8b8b);border-left:1px solid #1a1a1a;box-sizing:border-box"></div></div>
<svg class="a" style="left:840px;top:617px;" width="15" height="14" viewBox="0 0 15 14"><rect x="1" y="4" width="13" height="9" rx="1" fill="#e0e0e0" stroke="#222" stroke-width="0.8"/><circle cx="7" cy="8.5" r="3" fill="#3a3a3a" stroke="#d02020" stroke-width="1"/><circle cx="12" cy="3" r="2.5" fill="#ffd030"/></svg>
<svg class="a" style="left:859px;top:617px;" width="15" height="14" viewBox="0 0 15 14"><rect x="1" y="6" width="13" height="7" fill="#3a3a3a" stroke="#ddd" stroke-width="0.8"/><path d="M1 5L13 1L14 4L2 8Z" fill="#e0e0e0" stroke="#222" stroke-width="0.6"/><circle cx="2" cy="6" r="2" fill="#40a0ff"/></svg>
</div>
<div class="a" style="left:0;top:0;width:1352px;height:698px;clip-path:inset(638px 275px 22px 0px)">
<div class="a" style="left:0px;top:638px;width:1077px;height:38px;background:#727272"></div>
<div class="a" style="left:0px;top:638px;width:1077px;height:21px;background:#7b7b7b"></div>
<div class="a" style="left:0px;top:638px;width:179px;height:21px;background:#464646"></div>
<div class="a" style="left:971px;top:638px;width:106px;height:21px;background:#464646"></div>
<svg class="a" style="left:0px;top:638px;overflow:hidden" width="1077" height="21" viewBox="0 0 1077 21"><line x1="21.4" y1="0" x2="21.4" y2="21" stroke="#3a3a3a" stroke-width="1"/><line x1="53.1" y1="0" x2="53.1" y2="21" stroke="#3a3a3a" stroke-width="1"/><line x1="84.7" y1="0" x2="84.7" y2="21" stroke="#3a3a3a" stroke-width="1"/><line x1="116.4" y1="0" x2="116.4" y2="21" stroke="#3a3a3a" stroke-width="1"/><line x1="148.0" y1="0" x2="148.0" y2="21" stroke="#3a3a3a" stroke-width="1"/><line x1="179.7" y1="0" x2="179.7" y2="21" stroke="#666666" stroke-width="1"/><line x1="211.3" y1="0" x2="211.3" y2="21" stroke="#666666" stroke-width="1"/><line x1="243.0" y1="0" x2="243.0" y2="21" stroke="#666666" stroke-width="1"/><line x1="274.6" y1="0" x2="274.6" y2="21" stroke="#666666" stroke-width="1"/><line x1="306.3" y1="0" x2="306.3" y2="21" stroke="#666666" stroke-width="1"/><line x1="337.9" y1="0" x2="337.9" y2="21" stroke="#666666" stroke-width="1"/><line x1="369.6" y1="0" x2="369.6" y2="21" stroke="#666666" stroke-width="1"/><line x1="401.2" y1="0" x2="401.2" y2="21" stroke="#666666" stroke-width="1"/><line x1="432.9" y1="0" x2="432.9" y2="21" stroke="#666666" stroke-width="1"/><line x1="464.6" y1="0" x2="464.6" y2="21" stroke="#666666" stroke-width="1"/><line x1="496.2" y1="0" x2="496.2" y2="21" stroke="#666666" stroke-width="1"/><line x1="527.8" y1="0" x2="527.8" y2="21" stroke="#666666" stroke-width="1"/><line x1="559.5" y1="0" x2="559.5" y2="21" stroke="#666666" stroke-width="1"/><line x1="591.1" y1="0" x2="591.1" y2="21" stroke="#666666" stroke-width="1"/><line x1="622.8" y1="0" x2="622.8" y2="21" stroke="#666666" stroke-width="1"/><line x1="654.5" y1="0" x2="654.5" y2="21" stroke="#666666" stroke-width="1"/><line x1="686.1" y1="0" x2="686.1" y2="21" stroke="#666666" stroke-width="1"/><line x1="717.8" y1="0" x2="717.8" y2="21" stroke="#666666" stroke-width="1"/><line x1="749.4" y1="0" x2="749.4" y2="21" stroke="#666666" stroke-width="1"/><line x1="781.0" y1="0" x2="781.0" y2="21" stroke="#666666" stroke-width="1"/><line x1="812.7" y1="0" x2="812.7" y2="21" stroke="#666666" stroke-width="1"/><line x1="844.3" y1="0" x2="844.3" y2="21" stroke="#666666" stroke-width="1"/><line x1="876.0" y1="0" x2="876.0" y2="21" stroke="#666666" stroke-width="1"/><line x1="907.7" y1="0" x2="907.7" y2="21" stroke="#666666" stroke-width="1"/><line x1="939.3" y1="0" x2="939.3" y2="21" stroke="#666666" stroke-width="1"/><line x1="971.0" y1="0" x2="971.0" y2="21" stroke="#666666" stroke-width="1"/><line x1="1002.6" y1="0" x2="1002.6" y2="21" stroke="#3a3a3a" stroke-width="1"/><line x1="1034.2" y1="0" x2="1034.2" y2="21" stroke="#3a3a3a" stroke-width="1"/><line x1="1065.9" y1="0" x2="1065.9" y2="21" stroke="#3a3a3a" stroke-width="1"/></svg>
<div class="a" style="left:179px;top:638px;width:1px;height:21px;background:#2a2a2a"></div>
<div class="a" style="left:181px;top:638px;width:3px;height:21px;background:#5cc83a"></div>
<div class="a w" style="left:1px;top:659px;width:1071px;height:13px;background:linear-gradient(#b0b0b0,#8e8e8e);border:1px solid #3c3c3c;border-radius:6px"></div>
<svg class="a" style="left:2px;top:660px;" width="12" height="12" viewBox="0 0 12 12"><circle cx="5.5" cy="5.5" r="4.5" fill="#8a8a8a"/></svg>
<svg class="a" style="left:1060px;top:660px;" width="12" height="12" viewBox="0 0 12 12"><circle cx="5.5" cy="5.5" r="4.5" fill="#8a8a8a"/></svg>
<span class="t" style="left:32px;top:661px;width:40px;text-align:center;color:#000;font-size:11px;letter-spacing:0.3px">-40</span>
<span class="t" style="left:95px;top:661px;width:40px;text-align:center;color:#000;font-size:11px;letter-spacing:0.3px">-20</span>
<span class="t" style="left:161px;top:661px;width:40px;text-align:center;color:#000;font-size:11px;letter-spacing:0.3px">0</span>
<span class="t" style="left:224px;top:661px;width:40px;text-align:center;color:#000;font-size:11px;letter-spacing:0.3px">20</span>
<span class="t" style="left:287px;top:661px;width:40px;text-align:center;color:#000;font-size:11px;letter-spacing:0.3px">40</span>
<span class="t" style="left:350px;top:661px;width:40px;text-align:center;color:#000;font-size:11px;letter-spacing:0.3px">60</span>
<span class="t" style="left:412px;top:661px;width:40px;text-align:center;color:#000;font-size:11px;letter-spacing:0.3px">80</span>
<span class="t" style="left:475px;top:661px;width:40px;text-align:center;color:#000;font-size:11px;letter-spacing:0.3px">100</span>
<span class="t" style="left:538px;top:661px;width:40px;text-align:center;color:#000;font-size:11px;letter-spacing:0.3px">120</span>
<span class="t" style="left:601px;top:661px;width:40px;text-align:center;color:#000;font-size:11px;letter-spacing:0.3px">140</span>
<span class="t" style="left:664px;top:661px;width:40px;text-align:center;color:#000;font-size:11px;letter-spacing:0.3px">160</span>
<span class="t" style="left:727px;top:661px;width:40px;text-align:center;color:#000;font-size:11px;letter-spacing:0.3px">180</span>
<span class="t" style="left:789px;top:661px;width:40px;text-align:center;color:#000;font-size:11px;letter-spacing:0.3px">200</span>
<span class="t" style="left:852px;top:661px;width:40px;text-align:center;color:#000;font-size:11px;letter-spacing:0.3px">220</span>
<span class="t" style="left:915px;top:661px;width:40px;text-align:center;color:#000;font-size:11px;letter-spacing:0.3px">240</span>
<span class="t" style="left:978px;top:661px;width:40px;text-align:center;color:#000;font-size:11px;letter-spacing:0.3px">260</span>
<div class="a" style="left:0px;top:672px;width:1077px;height:4px;background:#7a7a7a"></div>
<div class="a" style="left:0px;top:675px;width:1077px;height:1px;background:#5e5e5e"></div>
<svg class="a" style="left:1064px;top:638px;" width="12" height="12" viewBox="0 0 12 12"><line x1="0" y1="0" x2="12" y2="12" stroke="#3a3a3a" stroke-width="1.2"/><line x1="1.2" y1="0" x2="12" y2="10.8" stroke="#a8a8a8" stroke-width="1"/><line x1="4" y1="0" x2="12" y2="8" stroke="#3a3a3a" stroke-width="1.2"/><line x1="5.2" y1="0" x2="12" y2="6.8" stroke="#a8a8a8" stroke-width="1"/></svg>
</div>
<div class="a" style="left:0;top:0;width:1352px;height:698px;clip-path:inset(676px 275px 0px 0px)">
<div class="a" style="left:0px;top:676px;width:1077px;height:22px;background:#727272"></div>
<div class="a w" style="left:5px;top:679px;width:32px;height:21px;background:linear-gradient(#565656,#363636);border:1px solid #1a1a1a;border-radius:4px;"></div>
<svg class="a" style="left:0px;top:688px;" width="10" height="10" viewBox="0 0 10 10"><line x1="0" y1="0" x2="10" y2="10" stroke="#3a3a3a" stroke-width="1.2"/><line x1="1.2" y1="0" x2="10" y2="8.8" stroke="#a8a8a8" stroke-width="1"/><line x1="4" y1="0" x2="10" y2="6" stroke="#3a3a3a" stroke-width="1.2"/><line x1="5.2" y1="0" x2="10" y2="4.8" stroke="#a8a8a8" stroke-width="1"/></svg>
<svg class="a" style="left:9px;top:682px;" width="14" height="14" viewBox="0 0 14 14"><circle cx="7" cy="7" r="6" fill="#f0f0f0" stroke="#222" stroke-width="0.8"/><path d="M7 7L3 4.5" stroke="#222" stroke-width="1"/><path d="M7 7L9 11" stroke="#d02020" stroke-width="1.2"/></svg>
<svg class="a" style="left:27px;top:682px" width="7" height="14"><path d="M0.3 5.6L3.5 0.4L6.7 5.6Z M0.3 7.4L3.5 12.6L6.7 7.4Z" fill="#bdbdbd"/></svg>
<span class="t" style="left:49px;top:685px;color:#000;font-size:11px;">View</span>
<span class="t" style="left:94px;top:685px;color:#000;font-size:11px;">Marker</span>
<span class="t" style="left:149px;top:685px;color:#000;font-size:11px;">Frame</span>
<span class="t" style="left:201px;top:685px;color:#000;font-size:11px;">Playback</span>
<div class="a w" style="left:259px;top:679px;width:39px;height:21px;border:1px solid #1a1a1a;border-radius:4px;overflow:hidden;"><div class="a" style="left:-1px;top:-1px;width:20px;height:21px;background:linear-gradient(#a9a9a9,#8b8b8b);box-sizing:border-box"></div><div class="a" style="left:18px;top:-1px;width:20px;height:21px;background:linear-gradient(#a9a9a9,#8b8b8b);border-left:1px solid #1a1a1a;box-sizing:border-box"></div></div>
<svg class="a" style="left:262px;top:682px;" width="14" height="14" viewBox="0 0 14 14"><circle cx="7" cy="7" r="6" fill="#f0f0f0" stroke="#222" stroke-width="0.8"/><path d="M7 7V1A6 6 0 0 1 13 7Z" fill="#f0a020"/><path d="M7 7L4 10" stroke="#d02020" stroke-width="1"/></svg>
<svg class="a" style="left:282px;top:682px;" width="12" height="14" viewBox="0 0 12 14"><path d="M3 6V4A3 3 0 0 1 9 4V6" stroke="#222" stroke-width="2.4" fill="none"/><path d="M3 6V4A3 3 0 0 1 9 4V6" stroke="#f0f0f0" stroke-width="1.1" fill="none"/><rect x="1.5" y="6" width="9" height="7" fill="#f0f0f0" stroke="#222" stroke-width="0.8"/></svg>
<div class="a w" style="left:305px;top:679px;width:227px;height:22px;background:linear-gradient(#a2a2a2,#b6b6b6);border:1px solid #202020;border-radius:10px"></div>
<div class="a" style="left:420px;top:679px;width:1px;height:21px;background:#202020"></div>
<svg class="a" style="left:311px;top:685px;" width="5" height="8" viewBox="0 0 5 8"><path d="M4 0.5L0.5 4L4 7.5Z" fill="#7a7a7a"/></svg>
<svg class="a" style="left:410px;top:685px;" width="5" height="8" viewBox="0 0 5 8"><path d="M1 0.5L4.5 4L1 7.5Z" fill="#7a7a7a"/></svg>
<svg class="a" style="left:426px;top:685px;" width="5" height="8" viewBox="0 0 5 8"><path d="M4 0.5L0.5 4L4 7.5Z" fill="#7a7a7a"/></svg>
<svg class="a" style="left:521px;top:685px;" width="5" height="8" viewBox="0 0 5 8"><path d="M1 0.5L4.5 4L1 7.5Z" fill="#7a7a7a"/></svg>
<span class="t" style="left:320px;top:685px;color:#000;font-size:11px;">Start:</span>
<span class="t" style="left:104px;top:685px;width:300px;text-align:right;color:#000;font-size:11px;">1</span>
<span class="t" style="left:436px;top:685px;color:#000;font-size:11px;">End:</span>
<span class="t" style="left:217px;top:685px;width:300px;text-align:right;color:#000;font-size:11px;">250</span>
<div class="a w" style="left:538px;top:679px;width:88px;height:22px;background:linear-gradient(#a2a2a2,#b6b6b6);border:1px solid #202020;border-radius:10px"></div>
<svg class="a" style="left:544px;top:685px;" width="5" height="8" viewBox="0 0 5 8"><path d="M4 0.5L0.5 4L4 7.5Z" fill="#7a7a7a"/></svg>
<svg class="a" style="left:615px;top:685px;" width="5" height="8" viewBox="0 0 5 8"><path d="M1 0.5L4.5 4L1 7.5Z" fill="#7a7a7a"/></svg>
<span class="t" style="left:310px;top:685px;width:300px;text-align:right;color:#000;font-size:11px;">1</span>
<div class="a w" style="left:644px;top:679px;width:118px;height:21px;border:1px solid #1a1a1a;border-radius:4px;overflow:hidden;"><div class="a" style="left:-1px;top:-1px;width:20px;height:21px;background:linear-gradient(#a9a9a9,#8b8b8b);box-sizing:border-box"></div><div class="a" style="left:18px;top:-1px;width:20px;height:21px;background:linear-gradient(#a9a9a9,#8b8b8b);border-left:1px solid #1a1a1a;box-sizing:border-box"></div><div class="a" style="left:38px;top:-1px;width:20px;height:21px;background:linear-gradient(#a9a9a9,#8b8b8b);border-left:1px solid #1a1a1a;box-sizing:border-box"></div><div class="a" style="left:58px;top:-1px;width:20px;height:21px;background:linear-gradient(#a9a9a9,#8b8b8b);border-left:1px solid #1a1a1a;box-sizing:border-box"></div><div class="a" style="left:78px;top:-1px;width:20px;height:21px;background:linear-gradient(#a9a9a9,#8b8b8b);border-left:1px solid #1a1a1a;box-sizing:border-box"></div><div class="a" style="left:98px;top:-1px;width:19px;height:21px;background:linear-gradient(#a9a9a9,#8b8b8b);border-left:1px solid #1a1a1a;box-sizing:border-box"></div></div>
<svg class="a" style="left:647px;top:682px;" width="14" height="14" viewBox="0 0 14 14"><path d="M1.5 1.5V12.5M12.5 1.5L7 7L12.5 12.5ZM7.5 1.5L2 7L7.5 12.5Z" fill="#f4f4f4" stroke="#1a1a1a" stroke-width="1"/></svg>
<svg class="a" style="left:666px;top:682px;" width="14" height="14" viewBox="0 0 14 14"><path d="M12.5 2L7.5 7L12.5 12ZM7.5 2L2.5 7L7.5 12Z" fill="#f4f4f4" stroke="#1a1a1a" stroke-width="1"/></svg>
<svg class="a" style="left:686px;top:682px;" width="14" height="14" viewBox="0 0 14 14"><path d="M11.5 0.5L2.5 7L11.5 13.5Z" fill="#f4f4f4" stroke="#1a1a1a" stroke-width="1"/></svg>
<svg class="a" style="left:706px;top:682px;" width="14" height="14" viewBox="0 0 14 14"><path d="M2.5 0.5L11.5 7L2.5 13.5Z" fill="#f4f4f4" stroke="#1a1a1a" stroke-width="1"/></svg>
<svg class="a" style="left:726px;top:682px;" width="14" height="14" viewBox="0 0 14 14"><path d="M1.5 2L6.5 7L1.5 12ZM6.5 2L11.5 7L6.5 12Z" fill="#f4f4f4" stroke="#1a1a1a" stroke-width="1"/></svg>
<svg class="a" style="left:746px;top:682px;" width="14" height="14" viewBox="0 0 14 14"><path d="M12.5 1.5V12.5M1.5 1.5L7 7L1.5 12.5ZM6.5 1.5L12 7L6.5 12.5Z" fill="#f4f4f4" stroke="#1a1a1a" stroke-width="1"/></svg>
<div class="a w" style="left:768px;top:679px;width:115px;height:21px;background:linear-gradient(#565656,#363636);border:1px solid #1a1a1a;border-radius:4px;"></div>
<span class="t" style="left:776px;top:685px;color:#fff;font-size:11px;">No Sync</span>
<svg class="a" style="left:873px;top:682px" width="7" height="14"><path d="M0.3 5.6L3.5 0.4L6.7 5.6Z M0.3 7.4L3.5 12.6L6.7 7.4Z" fill="#c8c8c8"/></svg>
<div class="a w" style="left:900px;top:679px;width:19px;height:21px;background:linear-gradient(#a9a9a9,#8b8b8b);border:1px solid #1a1a1a;border-radius:4px;"></div>
<svg class="a" style="left:903px;top:683px;" width="13" height="13" viewBox="0 0 13 13"><circle cx="6.5" cy="6.5" r="5" fill="#e83a10" stroke="#3a0800" stroke-width="0.9"/></svg>
<div class="a w" style="left:924px;top:679px;width:32px;height:21px;background:linear-gradient(#565656,#363636);border:1px solid #1a1a1a;border-radius:4px;"></div>
<svg class="a" style="left:929px;top:683px;" width="13" height="13" viewBox="0 0 13 13"><path d="M6.5 1L12 6.5L6.5 12L1 6.5Z" fill="#ffc020" stroke="#2a1a00" stroke-width="0.9"/></svg>
<svg class="a" style="left:945px;top:682px" width="7" height="14"><path d="M0.3 5.6L3.5 0.4L6.7 5.6Z M0.3 7.4L3.5 12.6L6.7 7.4Z" fill="#bdbdbd"/></svg>
<div class="a w" style="left:962px;top:679px;width:120px;height:22px;background:linear-gradient(#a0a0a0,#c8c8c8);border:1px solid #202020;border-radius:4px"></div>
<svg class="a" style="left:966px;top:682px;" width="18" height="16" viewBox="0 0 18 16"><circle cx="4" cy="12" r="2.5" fill="none" stroke="#d8d060" stroke-width="1.6"/><path d="M4 9.5V2H7" stroke="#d8d060" stroke-width="1.6" fill="none"/><path d="M7 12L15 5" stroke="#fff" stroke-width="1.8"/></svg>
</div>
<div class="a" style="left:0;top:0;width:1352px;height:698px;clip-path:inset(20px 0px 567px 1077px)">
<div class="a" style="left:1077px;top:20px;width:1px;height:678px;background:#101010"></div>
<div class="a" style="left:1078px;top:20px;width:274px;height:110px;background:#727272"></div>
<div class="a w" style="left:1087px;top:23px;width:32px;height:20px;background:linear-gradient(#565656,#363636);border:1px solid #1a1a1a;border-radius:4px;"></div>
<svg class="a" style="left:1091px;top:26px;" width="14" height="14" viewBox="0 0 14 14"><rect x="1" y="1" width="7" height="2.5" fill="#f0a030"/><path d="M3 3.5V12M3 7.5H6M3 11.5H6" stroke="#c8c8e8" stroke-width="1"/><rect x="6" y="6" width="7" height="3" fill="#f4f4f4"/><rect x="6" y="10" width="7" height="3" fill="#f4f4f4"/></svg>
<svg class="a" style="left:1109px;top:26px" width="7" height="14"><path d="M0.3 5.6L3.5 0.4L6.7 5.6Z M0.3 7.4L3.5 12.6L6.7 7.4Z" fill="#bdbdbd"/></svg>
<span class="t" style="left:1131px;top:29px;color:#000;font-size:11px;">View</span>
<span class="t" style="left:1176px;top:29px;color:#000;font-size:11px;">Search</span>
<div class="a w" style="left:1223px;top:23px;width:119px;height:20px;background:linear-gradient(#565656,#363636);border:1px solid #1a1a1a;border-radius:4px;"></div>
<span class="t" style="left:1231px;top:29px;color:#fff;font-size:11px;letter-spacing:0.2px">All Scenes</span>
<svg class="a" style="left:1332px;top:26px" width="7" height="14"><path d="M0.3 5.6L3.5 0.4L6.7 5.6Z M0.3 7.4L3.5 12.6L6.7 7.4Z" fill="#d0d0d0"/></svg>
<div class="a" style="left:1078px;top:46px;width:262px;height:69px;background:#6f6f6f"></div>
<div class="a" style="left:1078px;top:46px;width:274px;height:1px;background:#7c7c7c"></div>
<div class="a" style="left:1078px;top:47px;width:201px;height:19px;background:#8a9398"></div>
<div class="a" style="left:1078px;top:86px;width:262px;height:20px;background:#767676"></div>
<div class="a" style="left:1279px;top:46px;width:1px;height:69px;background:#626262"></div>
<div class="a" style="left:1299px;top:46px;width:1px;height:69px;background:#626262"></div>
<div class="a" style="left:1319px;top:46px;width:1px;height:69px;background:#626262"></div>
<div class="a" style="left:1279px;top:46px;width:1px;height:20px;background:#7a7f82"></div>
<svg class="a" style="left:1085px;top:52px;" width="10" height="10" viewBox="0 0 10 10"><circle cx="4.5" cy="4.5" r="4" fill="#e8e8e8" stroke="#111" stroke-width="1"/><path d="M2 4.5H7" stroke="#111" stroke-width="1.3"/></svg>
<div class="a" style="left:1094px;top:56px;width:8px;height:1px;background:#222"></div>
<svg class="a" style="left:1101px;top:47px;" width="20" height="19" viewBox="0 0 20 19"><circle cx="10" cy="10" r="8.5" fill="#a8adb0"/></svg>
<svg class="a" style="left:1103px;top:49px;" width="16" height="16" viewBox="0 0 16 16"><circle cx="3" cy="3" r="2" fill="#d8e05a" stroke="#4a4a10" stroke-width="0.6"/><rect x="8" y="2" width="5" height="10" rx="2" fill="#3b6fc4" stroke="#10204a" stroke-width="0.8"/><circle cx="6" cy="11" r="3.6" fill="#e8e8e8" stroke="#202020" stroke-width="0.8"/></svg>
<span class="t" style="left:1121px;top:53px;color:#000;font-size:11px;letter-spacing:0">Scene</span>
<div class="a" style="left:1108px;top:62px;width:1px;height:53px;background:#303030"></div>
<svg class="a" style="left:1104px;top:72px;" width="10" height="10" viewBox="0 0 10 10"><circle cx="4.5" cy="4.5" r="4" fill="#e8e8e8" stroke="#111" stroke-width="1"/><path d="M2 4.5H7" stroke="#111" stroke-width="1.3"/></svg>
<svg class="a" style="left:1120px;top:68px;" width="16" height="16" viewBox="0 0 16 16"><rect x="4" y="5" width="11" height="10" fill="#e8e0b0" stroke="#222" stroke-width="0.8"/><rect x="1" y="1" width="11" height="11" fill="#f4f4f4" stroke="#222" stroke-width="0.8"/><rect x="5.5" y="2.5" width="3" height="5" rx="1" fill="#3b6fc4"/><circle cx="4.5" cy="8.5" r="2" fill="#ddd" stroke="#222" stroke-width="0.6"/><circle cx="3" cy="3" r="1.2" fill="#e0e050"/></svg>
<span class="t" style="left:1141px;top:73px;color:#000;font-size:11px;letter-spacing:-0.05px">RenderLayers</span>
<svg class="a" style="left:1124px;top:92px;" width="10" height="10" viewBox="0 0 10 10"><circle cx="4.5" cy="4.5" r="4" fill="#e8e8e8" stroke="#111" stroke-width="1"/><path d="M2 4.5H7" stroke="#111" stroke-width="1.3"/><path d="M4.5 2V7" stroke="#111" stroke-width="1.3"/></svg>
<svg class="a" style="left:1137px;top:86px;" width="20" height="19" viewBox="0 0 20 19"><circle cx="10" cy="10" r="8.5" fill="#8a8e90"/></svg>
<svg class="a" style="left:1140px;top:88px;" width="16" height="16" viewBox="0 0 16 16"><rect x="4" y="5" width="11" height="10" fill="#e8e0b0" stroke="#222" stroke-width="0.8"/><rect x="1" y="1" width="11" height="11" fill="#f4f4f4" stroke="#222" stroke-width="0.8"/><rect x="5.5" y="2.5" width="3" height="5" rx="1" fill="#3b6fc4"/><circle cx="4.5" cy="8.5" r="2" fill="#ddd" stroke="#222" stroke-width="0.6"/><circle cx="3" cy="3" r="1.2" fill="#e0e050"/></svg>
<span class="t" style="left:1161px;top:93px;color:#000;font-size:11px;letter-spacing:-0.05px">RenderLayer</span>
<div class="a" style="left:1285px;top:92px;width:11px;height:11px;background:#a8a8a8;border:1px solid #505050"></div>
<svg class="a" style="left:1286px;top:92px;" width="10" height="10" viewBox="0 0 10 10"><path d="M1.5 5L4 8L8.5 1.5" stroke="#000" stroke-width="1.6" fill="none"/></svg>
<svg class="a" style="left:1120px;top:106px;" width="20" height="10" viewBox="0 0 20 10"><circle cx="9" cy="9.5" r="8.5" fill="#9aa0a4"/><circle cx="9" cy="10" r="6" fill="#b8c8d0" stroke="#303030" stroke-width="0.8"/></svg>
<div class="a" style="left:1339px;top:51px;width:13px;height:58px;background:#636363;border:1px solid #555;border-radius:6px"></div>
<div class="a" style="left:1340px;top:52px;width:11px;height:12px;background:#9a9a9a;border:1px solid #4a4a4a;border-radius:6px"></div>
<div class="a" style="left:1082px;top:114px;width:251px;height:13px;background:#636363;border:1px solid #555;border-radius:6px"></div>
<div class="a" style="left:1083px;top:115px;width:204px;height:11px;background:linear-gradient(#b0b0b0,#8e8e8e);border:1px solid #4a4a4a;border-radius:6px"></div>
<div class="a" style="left:1078px;top:129px;width:274px;height:1px;background:#5a5a5a"></div>
<div class="a" style="left:1078px;top:130px;width:274px;height:1px;background:#101010"></div>
<svg class="a" style="left:1078px;top:116px;" width="13" height="13" viewBox="0 0 13 13"><line x1="0" y1="0" x2="13" y2="13" stroke="#3a3a3a" stroke-width="1.2"/><line x1="1.2" y1="0" x2="13" y2="11.8" stroke="#a8a8a8" stroke-width="1"/><line x1="4" y1="0" x2="13" y2="9" stroke="#3a3a3a" stroke-width="1.2"/><line x1="5.2" y1="0" x2="13" y2="7.8" stroke="#a8a8a8" stroke-width="1"/></svg>
<div class="a" style="left:1347px;top:27px;width:12px;height:16px;background:linear-gradient(#b0b0b0,#909090);border:1px solid #1a1a1a;border-radius:4px"></div>
<svg class="a" style="left:1343px;top:20px;" width="10" height="10" viewBox="0 0 10 10"><line x1="0" y1="0" x2="10" y2="10" stroke="#3a3a3a" stroke-width="1.2"/><line x1="1.2" y1="0" x2="10" y2="8.8" stroke="#a8a8a8" stroke-width="1"/><line x1="4" y1="0" x2="10" y2="6" stroke="#3a3a3a" stroke-width="1.2"/><line x1="5.2" y1="0" x2="10" y2="4.8" stroke="#a8a8a8" stroke-width="1"/></svg>
</div>
<div class="a" style="left:0;top:0;width:1352px;height:698px;clip-path:inset(131px 0px 0px 1078px)">
<div class="a" style="left:1078px;top:131px;width:274px;height:567px;background:#727272"></div>
<div class="a" style="left:1078px;top:157px;width:274px;height:1px;background:#6a6a6a"></div>
<div class="a w" style="left:1087px;top:135px;width:32px;height:20px;background:linear-gradient(#565656,#363636);border:1px solid #1a1a1a;border-radius:4px;"></div>
<svg class="a" style="left:1091px;top:138px;" width="14" height="14" viewBox="0 0 14 14"><rect x="1" y="2" width="11" height="4" rx="2" fill="#d0d0d0" stroke="#222" stroke-width="0.6"/><rect x="1" y="8" width="11" height="4" rx="2" fill="#f4f4f4" stroke="#222" stroke-width="0.8"/></svg>
<svg class="a" style="left:1109px;top:138px" width="7" height="14"><path d="M0.3 5.6L3.5 0.4L6.7 5.6Z M0.3 7.4L3.5 12.6L6.7 7.4Z" fill="#bdbdbd"/></svg>
<div class="a w" style="left:1127px;top:135px;width:259px;height:20px;border:1px solid #1a1a1a;border-radius:4px;overflow:hidden;"><div class="a" style="left:-1px;top:-1px;width:20px;height:20px;background:linear-gradient(#565656,#363636);box-sizing:border-box"></div><div class="a" style="left:18px;top:-1px;width:20px;height:20px;background:linear-gradient(#565656,#363636);border-left:1px solid #1a1a1a;box-sizing:border-box"></div><div class="a" style="left:38px;top:-1px;width:20px;height:20px;background:linear-gradient(#565656,#363636);border-left:1px solid #1a1a1a;box-sizing:border-box"></div><div class="a" style="left:58px;top:-1px;width:20px;height:20px;background:linear-gradient(#565656,#363636);border-left:1px solid #1a1a1a;box-sizing:border-box"></div><div class="a" style="left:78px;top:-1px;width:20px;height:20px;background:linear-gradient(#565656,#363636);border-left:1px solid #1a1a1a;box-sizing:border-box"></div><div class="a" style="left:98px;top:-1px;width:20px;height:20px;background:linear-gradient(#565656,#363636);border-left:1px solid #1a1a1a;box-sizing:border-box"></div><div class="a" style="left:118px;top:-1px;width:20px;height:20px;background:linear-gradient(#565656,#363636);border-left:1px solid #1a1a1a;box-sizing:border-box"></div><div class="a" style="left:138px;top:-1px;width:20px;height:20px;background:linear-gradient(#565656,#363636);border-left:1px solid #1a1a1a;box-sizing:border-box"></div><div class="a" style="left:158px;top:-1px;width:20px;height:20px;background:linear-gradient(#6690d2,#4a72b4);border-left:1px solid #1a1a1a;box-sizing:border-box"></div><div class="a" style="left:178px;top:-1px;width:20px;height:20px;background:linear-gradient(#565656,#363636);border-left:1px solid #1a1a1a;box-sizing:border-box"></div><div class="a" style="left:198px;top:-1px;width:20px;height:20px;background:linear-gradient(#565656,#363636);border-left:1px solid #1a1a1a;box-sizing:border-box"></div><div class="a" style="left:218px;top:-1px;width:20px;height:20px;background:linear-gradient(#565656,#363636);border-left:1px solid #1a1a1a;box-sizing:border-box"></div><div class="a" style="left:238px;top:-1px;width:20px;height:20px;background:linear-gradient(#565656,#363636);border-left:1px solid #1a1a1a;box-sizing:border-box"></div></div>
<svg class="a" style="left:1130px;top:138px;" width="14" height="14" viewBox="0 0 14 14"><rect x="1" y="4" width="12" height="8" rx="1" fill="#d8d8d8" stroke="#222" stroke-width="0.8"/><circle cx="7" cy="8" r="2.8" fill="#333" stroke="#b04040" stroke-width="0.8"/><rect x="2" y="2" width="4" height="2" fill="#bbb"/></svg>
<svg class="a" style="left:1149px;top:138px;" width="14" height="14" viewBox="0 0 14 14"><rect x="4" y="5" width="9" height="8" fill="#e8e0b0" stroke="#222" stroke-width="0.7"/><rect x="1" y="1" width="9" height="9" fill="#f0f0f0" stroke="#222" stroke-width="0.7"/><rect x="5" y="2" width="2.5" height="5" fill="#3b6fc4"/></svg>
<svg class="a" style="left:1169px;top:138px;" width="14" height="14" viewBox="0 0 14 14"><circle cx="3" cy="3" r="1.8" fill="#d8e05a"/><rect x="8" y="2" width="4.5" height="9" rx="2" fill="#3b6fc4"/><circle cx="5.5" cy="10" r="3.4" fill="#d8d8d8" stroke="#222" stroke-width="0.6"/></svg>
<svg class="a" style="left:1189px;top:138px;" width="14" height="14" viewBox="0 0 14 14"><circle cx="7" cy="7" r="5.8" fill="#5a8ac8" stroke="#222" stroke-width="0.8"/><path d="M3 5Q6 3 7 6T11 9" fill="#5a9a50"/></svg>
<svg class="a" style="left:1209px;top:138px;" width="14" height="14" viewBox="0 0 14 14"><path d="M7 1L13 4V10L7 13L1 10V4Z" fill="#d8a050" stroke="#3a2000" stroke-width="0.8"/><path d="M7 7L13 4V10L7 13Z" fill="#b07830"/></svg>
<svg class="a" style="left:1229px;top:138px;" width="14" height="14" viewBox="0 0 14 14"><path d="M4 9L9 4" stroke="#bbb" stroke-width="1.5"/><rect x="1" y="6" width="6" height="6" rx="3" fill="none" stroke="#ccc" stroke-width="1.5" transform="rotate(-45 4 9)"/><rect x="7" y="2" width="6" height="6" rx="3" fill="none" stroke="#ccc" stroke-width="1.5" transform="rotate(-45 10 5)"/></svg>
<svg class="a" style="left:1249px;top:138px;" width="14" height="14" viewBox="0 0 14 14"><path d="M2 12L8 6" stroke="#6a8cc8" stroke-width="2.2"/><path d="M8 6A3 3 0 1 0 12 2L10 4" stroke="#6a8cc8" stroke-width="2" fill="none"/></svg>
<svg class="a" style="left:1269px;top:138px;" width="14" height="14" viewBox="0 0 14 14"><path d="M2 3L12 3L7 12Z" fill="none" stroke="#ddd" stroke-width="1"/><circle cx="2" cy="3" r="1.5" fill="#fff" stroke="#222" stroke-width="0.5"/><circle cx="12" cy="3" r="1.5" fill="#fff" stroke="#222" stroke-width="0.5"/><circle cx="7" cy="12" r="1.5" fill="#fff" stroke="#222" stroke-width="0.5"/></svg>
<svg class="a" style="left:1289px;top:138px;" width="14" height="14" viewBox="0 0 14 14"><defs><radialGradient id="mi" cx="0.35" cy="0.3" r="0.75"><stop offset="0" stop-color="#ffffff"/><stop offset="0.6" stop-color="#c8c8c8"/><stop offset="1" stop-color="#707070"/></radialGradient></defs><circle cx="7" cy="7" r="6.2" fill="url(#mi)" stroke="#1a1a1a" stroke-width="0.9"/><path d="M7 7H12.6A5.6 5.6 0 0 1 7 12.6Z" fill="#b0503a"/><path d="M7 7V1.4A5.6 5.6 0 0 1 12.6 7Z" fill="#b8b8b8"/><path d="M7 7H1.4A5.6 5.6 0 0 0 7 12.6Z" fill="#dcdcdc"/><path d="M7 7V1.4A5.6 5.6 0 0 0 1.4 7Z" fill="#f8f8f8"/></svg>
<svg class="a" style="left:1309px;top:138px;" width="14" height="14" viewBox="0 0 14 14"><rect x="1" y="1" width="12" height="12" fill="#e8e8e8"/><path d="M1 1h3v3h-3zM7 1h3v3h-3zM4 4h3v3h-3zM10 4h3v3h-3zM1 7h3v3h-3zM7 7h3v3h-3zM4 10h3v3h-3zM10 10h3v3h-3z" fill="#a83a3a"/></svg>
<svg class="a" style="left:1329px;top:138px;" width="14" height="14" viewBox="0 0 14 14"><path d="M4 1V8M0.5 4.5H7.5M10 6V13M6.5 9.5H13.5M11 1V5M9 3H13" stroke="#f0e0a0" stroke-width="1.1"/></svg>
<svg class="a" style="left:1087px;top:166px;" width="18" height="18" viewBox="0 0 18 18"><path d="M2 16L8 10" stroke="#1a1a1a" stroke-width="2.6" stroke-linecap="round"/><path d="M2 16L8 10" stroke="#e8e8e8" stroke-width="1.2"/><path d="M5.5 8.5L10 13L11 10.5L14.5 7L15.5 7.5L16 6.5L11.5 2L10.5 2.5L11 3.5L7.5 7Z" fill="#e0e0e0" stroke="#1a1a1a" stroke-width="0.9" stroke-linejoin="round"/></svg>
<svg class="a" style="left:1109px;top:168px;" width="16" height="16" viewBox="0 0 16 16"><circle cx="3" cy="3" r="2" fill="#d8e05a" stroke="#4a4a10" stroke-width="0.6"/><rect x="8" y="2" width="5" height="10" rx="2" fill="#3b6fc4" stroke="#10204a" stroke-width="0.8"/><circle cx="6" cy="11" r="3.6" fill="#e8e8e8" stroke="#202020" stroke-width="0.8"/></svg>
<svg class="a" style="left:1128px;top:172px;" width="6" height="6" viewBox="0 0 6 6"><path d="M1 0L5 3.0L1 6Z" fill="#2a2a2a"/></svg>
<svg class="a" style="left:1150px;top:169px;" width="14" height="14" viewBox="0 0 14 14"><path d="M6.5 0.8L12 3.5V9.5L6.5 12.2L1 9.5V3.5Z" fill="#e89a3a" stroke="#3a2000" stroke-width="0.8"/><path d="M1 3.5L6.5 6.2L12 3.5" fill="none" stroke="#fff2d0" stroke-width="0.9"/><path d="M6.5 6.2V12.2" stroke="#fff2d0" stroke-width="0.9"/><path d="M6.5 6.2L12 3.5V9.5L6.5 12.2Z" fill="#c87a20"/></svg>
<span class="t" style="left:1170px;top:172px;color:#000;font-size:11px;letter-spacing:0.3px">Cube.009</span>
<svg class="a" style="left:1224px;top:172px;" width="6" height="6" viewBox="0 0 6 6"><path d="M1 0L5 3.0L1 6Z" fill="#2a2a2a"/></svg>
<svg class="a" style="left:1244px;top:169px;" width="14" height="14" viewBox="0 0 14 14"><defs><radialGradient id="mi" cx="0.35" cy="0.3" r="0.75"><stop offset="0" stop-color="#ffffff"/><stop offset="0.6" stop-color="#c8c8c8"/><stop offset="1" stop-color="#707070"/></radialGradient></defs><circle cx="7" cy="7" r="6.2" fill="url(#mi)" stroke="#1a1a1a" stroke-width="0.9"/><path d="M7 7H12.6A5.6 5.6 0 0 1 7 12.6Z" fill="#b0503a"/><path d="M7 7V1.4A5.6 5.6 0 0 1 12.6 7Z" fill="#b8b8b8"/><path d="M7 7H1.4A5.6 5.6 0 0 0 7 12.6Z" fill="#dcdcdc"/><path d="M7 7V1.4A5.6 5.6 0 0 0 1.4 7Z" fill="#f8f8f8"/></svg>
<span class="t" style="left:1265px;top:172px;color:#000;font-size:11px;letter-spacing:0.3px">Material.010</span>
<div class="a" style="left:1086px;top:202px;width:217px;height:40px;background:#6e6e6e;border:1px solid #4e4e4e;border-radius:5px"></div>
<div class="a" style="left:1092px;top:208px;width:205px;height:18px;background:#5680c2"></div>
<svg class="a" style="left:1093px;top:209px;" width="16" height="16" viewBox="0 0 16 16"><defs><radialGradient id="sg" cx="35%" cy="30%" r="70%"><stop offset="0" stop-color="#9a9a9a"/><stop offset="0.5" stop-color="#2a2a2a"/><stop offset="1" stop-color="#050505"/></radialGradient></defs><circle cx="8" cy="8" r="7.5" fill="url(#sg)"/></svg>
<span class="t" style="left:1115px;top:213px;color:#fff;font-size:11px;letter-spacing:0.35px">Material.010</span>
<svg class="a" style="left:1095px;top:228px;" width="10" height="10" viewBox="0 0 10 10"><circle cx="4.5" cy="4.5" r="3.8" fill="none" stroke="#4a4a4a" stroke-width="0.9"/><path d="M2.5 4.5H6.5M4.5 2.5V6.5" stroke="#4a4a4a" stroke-width="0.9"/></svg>
<div class="a" style="left:1196px;top:231px;width:14px;height:1px;background:#e8e8e8"></div>
<div class="a" style="left:1196px;top:234px;width:14px;height:1px;background:#e8e8e8"></div>
<div class="a" style="left:1196px;top:232px;width:14px;height:1px;background:#2a2a2a"></div>
<div class="a" style="left:1196px;top:235px;width:14px;height:1px;background:#2a2a2a"></div>
<div class="a w" style="left:1311px;top:202px;width:19px;height:20px;border:1px solid #1a1a1a;border-radius:4px;overflow:hidden;"><div class="a" style="left:-1px;top:-1px;width:20px;height:20px;background:linear-gradient(#a9a9a9,#8b8b8b);box-sizing:border-box"></div></div>
<div class="a w" style="left:1311px;top:202px;width:20px;height:59px;border:1px solid #1a1a1a;border-radius:4px;overflow:hidden"><div class="a" style="left:0;top:0;width:18px;height:19px;background:linear-gradient(#a9a9a9,#8b8b8b)"></div><div class="a" style="left:0;top:19px;width:18px;height:19px;background:linear-gradient(#a9a9a9,#8b8b8b);border-top:1px solid #1a1a1a"></div><div class="a" style="left:0;top:38px;width:18px;height:20px;background:linear-gradient(#565656,#363636);border-top:1px solid #1a1a1a"></div></div>
<svg class="a" style="left:1311px;top:203px;" width="20" height="18" viewBox="0 0 20 18"><path d="M10.0 3.5V14.5M4.5 9.0H15.5" stroke="#1a1a1a" stroke-width="3.6"/><path d="M10.0 4.5V13.5M5.5 9.0H14.5" stroke="#f2f2f2" stroke-width="1.8"/></svg>
<svg class="a" style="left:1311px;top:221px;" width="20" height="19" viewBox="0 0 20 19"><path d="M5 9.5H15" stroke="#1a1a1a" stroke-width="3.6"/><path d="M5.5 9.5H14.5" stroke="#f2f2f2" stroke-width="1.8"/></svg>
<svg class="a" style="left:1313px;top:243px;" width="16" height="16" viewBox="0 0 16 16"><path d="M3 3H13L9 13Z" fill="#111"/><path d="M11 7L9 12" stroke="#eee" stroke-width="1.2"/></svg>
<div class="a w" style="left:1086px;top:267px;width:154px;height:20px;border:1px solid #1a1a1a;border-radius:4px;overflow:hidden;"><div class="a" style="left:-1px;top:-1px;width:33px;height:20px;background:linear-gradient(#565656,#363636);box-sizing:border-box"></div><div class="a" style="left:31px;top:-1px;width:62px;height:20px;background:linear-gradient(#9a9a9a,#b4b4b4);border-left:1px solid #1a1a1a;box-sizing:border-box"></div><div class="a" style="left:93px;top:-1px;width:20px;height:20px;background:linear-gradient(#a9a9a9,#8b8b8b);border-left:1px solid #1a1a1a;box-sizing:border-box"></div><div class="a" style="left:113px;top:-1px;width:20px;height:20px;background:linear-gradient(#a9a9a9,#8b8b8b);border-left:1px solid #1a1a1a;box-sizing:border-box"></div><div class="a" style="left:133px;top:-1px;width:20px;height:20px;background:linear-gradient(#a9a9a9,#8b8b8b);border-left:1px solid #1a1a1a;box-sizing:border-box"></div></div>
<svg class="a" style="left:1090px;top:270px;" width="14" height="14" viewBox="0 0 14 14"><defs><radialGradient id="mi" cx="0.35" cy="0.3" r="0.75"><stop offset="0" stop-color="#ffffff"/><stop offset="0.6" stop-color="#c8c8c8"/><stop offset="1" stop-color="#707070"/></radialGradient></defs><circle cx="7" cy="7" r="6.2" fill="url(#mi)" stroke="#1a1a1a" stroke-width="0.9"/><path d="M7 7H12.6A5.6 5.6 0 0 1 7 12.6Z" fill="#b0503a"/><path d="M7 7V1.4A5.6 5.6 0 0 1 12.6 7Z" fill="#b8b8b8"/><path d="M7 7H1.4A5.6 5.6 0 0 0 7 12.6Z" fill="#dcdcdc"/><path d="M7 7V1.4A5.6 5.6 0 0 0 1.4 7Z" fill="#f8f8f8"/></svg>
<svg class="a" style="left:1108px;top:270px" width="7" height="14"><path d="M0.3 5.6L3.5 0.4L6.7 5.6Z M0.3 7.4L3.5 12.6L6.7 7.4Z" fill="#bdbdbd"/></svg>
<span class="t" style="left:1125px;top:273px;color:#000;font-size:11px;letter-spacing:0.3px">Material.0</span>
<span class="t" style="left:1179px;top:273px;width:20px;text-align:center;color:#000;font-size:11px;">F</span>
<svg class="a" style="left:1199px;top:269px;" width="20" height="16" viewBox="0 0 20 16"><path d="M10.0 2.5V13.5M4.5 8.0H15.5" stroke="#1a1a1a" stroke-width="3.6"/><path d="M10.0 3.5V12.5M5.5 8.0H14.5" stroke="#f2f2f2" stroke-width="1.8"/></svg>
<svg class="a" style="left:1219px;top:269px;" width="20" height="16" viewBox="0 0 20 16"><path d="M5.5 3.5L14.5 12.5M14.5 3.5L5.5 12.5" stroke="#1a1a1a" stroke-width="3.4"/><path d="M6.0 4.0L14.0 12.0M14.0 4.0L6.0 12.0" stroke="#f2f2f2" stroke-width="1.7"/></svg>
<div class="a w" style="left:1248px;top:267px;width:20px;height:20px;background:linear-gradient(#a9a9a9,#8b8b8b);border:1px solid #1a1a1a;border-radius:4px;"></div>
<svg class="a" style="left:1250px;top:269px;" width="16" height="16" viewBox="0 0 16 16"><rect x="3" y="1" width="7" height="5" fill="#f0f0f0" stroke="#222" stroke-width="0.8"/><rect x="1" y="9" width="7" height="5" fill="#f0f0f0" stroke="#222" stroke-width="0.8"/><path d="M10 3.5Q15 4 14 8Q13 12 8 11.5" stroke="#80b0ff" stroke-width="1.5" fill="none"/><rect x="9" y="2" width="2" height="2" fill="#f0a030"/></svg>
<div class="a w" style="left:1276px;top:267px;width:55px;height:20px;background:linear-gradient(#565656,#363636);border:1px solid #1a1a1a;border-radius:4px;"></div>
<span class="t" style="left:1284px;top:273px;color:#fff;font-size:11px;">Data</span>
<svg class="a" style="left:1321px;top:270px" width="7" height="14"><path d="M0.3 5.6L3.5 0.4L6.7 5.6Z M0.3 7.4L3.5 12.6L6.7 7.4Z" fill="#d0d0d0"/></svg>
<div class="a w" style="left:1086px;top:292px;width:245px;height:20px;border:1px solid #1a1a1a;border-radius:4px;overflow:hidden;"><div class="a" style="left:-1px;top:-1px;width:61px;height:20px;background:linear-gradient(#6690d2,#4a72b4);box-sizing:border-box"></div><div class="a" style="left:59px;top:-1px;width:61px;height:20px;background:linear-gradient(#565656,#363636);border-left:1px solid #1a1a1a;box-sizing:border-box"></div><div class="a" style="left:120px;top:-1px;width:61px;height:20px;background:linear-gradient(#565656,#363636);border-left:1px solid #1a1a1a;box-sizing:border-box"></div><div class="a" style="left:181px;top:-1px;width:63px;height:20px;background:linear-gradient(#565656,#363636);border-left:1px solid #1a1a1a;box-sizing:border-box"></div></div>
<span class="t" style="left:1086px;top:298px;width:60px;text-align:center;color:#000;font-size:11px;">Surface</span>
<span class="t" style="left:1146px;top:298px;width:61px;text-align:center;color:#fff;font-size:11px;">Wire</span>
<span class="t" style="left:1207px;top:298px;width:61px;text-align:center;color:#fff;font-size:11px;">Volume</span>
<span class="t" style="left:1268px;top:298px;width:63px;text-align:center;color:#fff;font-size:11px;">Halo</span>
<div class="a" style="left:1082px;top:318px;width:252px;height:1px;background:#5a5a5a"></div>
<div class="a" style="left:1082px;top:319px;width:252px;height:1px;background:#858585"></div>
<svg class="a" style="left:1090.5px;top:326.5px;" width="9" height="9" viewBox="0 0 9 9"><path d="M0 0.5L9 0.5L4.5 8.5Z" fill="#1e1e1e"/></svg>
<span class="t" style="left:1103px;top:327px;color:#000;font-size:12px;">Preview</span>
<svg class="a" style="left:1318px;top:330px;" width="12" height="6" viewBox="0 0 12 6"><rect x="0" y="0" width="1" height="1" fill="#3a3a3a"/><rect x="1" y="1" width="1" height="1" fill="#9a9a9a"/><rect x="0" y="3" width="1" height="1" fill="#3a3a3a"/><rect x="1" y="4" width="1" height="1" fill="#9a9a9a"/><rect x="3" y="0" width="1" height="1" fill="#3a3a3a"/><rect x="4" y="1" width="1" height="1" fill="#9a9a9a"/><rect x="3" y="3" width="1" height="1" fill="#3a3a3a"/><rect x="4" y="4" width="1" height="1" fill="#9a9a9a"/><rect x="6" y="0" width="1" height="1" fill="#3a3a3a"/><rect x="7" y="1" width="1" height="1" fill="#9a9a9a"/><rect x="6" y="3" width="1" height="1" fill="#3a3a3a"/><rect x="7" y="4" width="1" height="1" fill="#9a9a9a"/><rect x="9" y="0" width="1" height="1" fill="#3a3a3a"/><rect x="10" y="1" width="1" height="1" fill="#9a9a9a"/><rect x="9" y="3" width="1" height="1" fill="#3a3a3a"/><rect x="10" y="4" width="1" height="1" fill="#9a9a9a"/></svg>
<svg class="a" style="left:1087px;top:352px;overflow:hidden;border-radius:4px" width="206" height="112"><rect x="0" y="0" width="206" height="112" fill="#a6a6a6"/><polygon points="0.0,3.8 22.0,8.8 22.0,31.2 0.0,28.7" fill="#363636"/><polygon points="0.0,54.5 22.0,54.5 22.0,75.7 0.0,77.7" fill="#363636"/><polygon points="0.0,102.7 22.0,98.5 22.0,112.0 0.0,112.0" fill="#363636"/><polygon points="22.0,0.0 47.0,0.0 47.0,15.4 22.0,8.8" fill="#363636"/><polygon points="22.0,31.2 47.0,34.5 47.0,54.5 22.0,54.5" fill="#363636"/><polygon points="22.0,75.7 47.0,74.4 47.0,94.3 22.0,98.5" fill="#363636"/><polygon points="47.0,15.4 66.0,19.2 66.0,36.0 47.0,34.5" fill="#363636"/><polygon points="47.0,54.5 66.0,54.5 66.0,73.0 47.0,74.4" fill="#363636"/><polygon points="47.0,94.3 66.0,90.0 66.0,92.0 47.0,96.0" fill="#363636"/><polygon points="140.0,0.0 159.0,0.0 159.0,13.8 140.0,19.7" fill="#363636"/><polygon points="140.0,35.3 159.0,33.7 159.0,54.5 140.0,54.5" fill="#363636"/><polygon points="140.0,74.0 159.0,74.4 159.0,94.3 140.0,93.0" fill="#363636"/><polygon points="159.0,13.8 185.0,6.3 185.0,30.4 159.0,33.7" fill="#363636"/><polygon points="159.0,54.5 185.0,54.5 185.0,77.7 159.0,74.4" fill="#363636"/><polygon points="159.0,94.3 185.0,99.3 185.0,112.0 159.0,97.0" fill="#363636"/><polygon points="185.0,0.0 206.0,0.0 206.0,4.6 185.0,6.3" fill="#363636"/><polygon points="185.0,30.4 206.0,28.7 206.0,54.5 185.0,54.5" fill="#363636"/><polygon points="185.0,77.7 206.0,79.4 206.0,104.0 185.0,99.3" fill="#363636"/><polygon points="66.0,0.0 140.0,0.0 140.0,19.7 66.0,19.2" fill="#363636"/><polygon points="79.0,11.0 89.0,1.0 99.0,4.0" fill="#a6a6a6"/><polygon points="106.0,4.0 116.0,1.0 125.0,8.0" fill="#a6a6a6"/><polygon points="125.0,8.0 140.0,1.0 140.0,20.0" fill="#a6a6a6"/><polygon points="22.0,98.5 47.0,96.0 66.0,92.0 140.0,95.0 159.0,97.0 185.0,99.3 206.0,104.0 206.0,112.0 0.0,112.0 0.0,102.7" fill="#a6a6a6"/><polygon points="0.0,102.7 22.0,98.5 25.0,104.0 0.0,112.0" fill="#363636"/><polygon points="55.0,100.0 70.0,95.5 81.0,100.0 66.0,106.0" fill="#363636"/><polygon points="124.0,100.0 135.0,95.5 151.0,100.0 141.0,106.0" fill="#363636"/><polygon points="153.0,100.5 168.0,96.5 206.0,106.0 206.0,112.0 193.0,112.0" fill="#363636"/><polygon points="19.0,112.0 38.0,106.0 47.0,112.0" fill="#363636"/><polygon points="83.0,112.0 103.0,107.0 109.0,112.0" fill="#363636"/><defs><radialGradient id="sph" cx="0.5" cy="0.5" r="0.5" fx="0.37" fy="0.32"><stop offset="0" stop-color="#d8d8d8"/><stop offset="0.1" stop-color="#a8a8a8"/><stop offset="0.28" stop-color="#3a3a3a"/><stop offset="0.75" stop-color="#232323"/><stop offset="1" stop-color="#0c0c0c"/></radialGradient></defs><circle cx="102.5" cy="55" r="49" fill="url(#sph)"/></svg>
<div class="a" style="left:1086px;top:351px;width:207px;height:113px;border:1px solid #3a3a3a;border-radius:5px"></div>
<div class="a" style="left:1183px;top:467px;width:14px;height:1px;background:#e8e8e8"></div>
<div class="a" style="left:1183px;top:470px;width:14px;height:1px;background:#e8e8e8"></div>
<div class="a" style="left:1183px;top:468px;width:14px;height:1px;background:#2a2a2a"></div>
<div class="a" style="left:1183px;top:471px;width:14px;height:1px;background:#2a2a2a"></div>
<div class="a w" style="left:1301px;top:352px;width:30px;height:120px;border:1px solid #1a1a1a;border-radius:4px;overflow:hidden;background:linear-gradient(#565656,#363636)"></div>
<div class="a" style="left:1302px;top:353px;width:28px;height:19px;background:linear-gradient(#565656,#363636);"></div>
<div class="a" style="left:1302px;top:373px;width:28px;height:19px;background:linear-gradient(#6690d2,#4a72b4);border-top:1px solid #1a1a1a;"></div>
<div class="a" style="left:1302px;top:393px;width:28px;height:19px;background:linear-gradient(#565656,#363636);border-top:1px solid #1a1a1a;"></div>
<div class="a" style="left:1302px;top:413px;width:28px;height:19px;background:linear-gradient(#565656,#363636);border-top:1px solid #1a1a1a;"></div>
<div class="a" style="left:1302px;top:432px;width:28px;height:19px;background:linear-gradient(#565656,#363636);border-top:1px solid #1a1a1a;"></div>
<div class="a" style="left:1302px;top:452px;width:28px;height:19px;background:linear-gradient(#565656,#363636);border-top:1px solid #1a1a1a;"></div>
<svg class="a" style="left:1308px;top:355px;" width="15" height="15" viewBox="0 0 15 15"><rect x="2" y="2" width="11" height="11" fill="#a8a8a8" stroke="#333" stroke-width="0.7"/></svg>
<svg class="a" style="left:1308px;top:375px;" width="15" height="15" viewBox="0 0 15 15"><defs><radialGradient id="pg" cx="40%" cy="35%" r="65%"><stop offset="0" stop-color="#fff"/><stop offset="0.7" stop-color="#ccc"/><stop offset="1" stop-color="#777"/></radialGradient></defs><circle cx="7.5" cy="7.5" r="6.5" fill="url(#pg)" stroke="#222" stroke-width="0.9"/></svg>
<svg class="a" style="left:1308px;top:395px;" width="15" height="15" viewBox="0 0 15 15"><path d="M7.5 1L13.5 4V11L7.5 14L1.5 11V4Z" fill="#b0b0b0" stroke="#333" stroke-width="0.6"/><path d="M7.5 7.5L13.5 4V11L7.5 14Z" fill="#8a8a8a"/></svg>
<svg class="a" style="left:1308px;top:415px;" width="15" height="15" viewBox="0 0 15 15"><path d="M2 4L5 3L7.5 5L10 3L13 4L12 7L9 8L8.5 13H6.5L6 8L3 7Z" fill="#d0d0d0" stroke="#444" stroke-width="0.6"/></svg>
<svg class="a" style="left:1308px;top:434px;" width="15" height="15" viewBox="0 0 15 15"><path d="M3 13Q3 6 7 3M7 13Q7 8 10 6M11 13Q11 10 13 9" stroke="#d8d8d8" stroke-width="1.2" fill="none"/></svg>
<svg class="a" style="left:1308px;top:454px;" width="15" height="15" viewBox="0 0 15 15"><circle cx="6.5" cy="9" r="4.5" fill="#b8b8b8" stroke="#222" stroke-width="0.7"/><circle cx="11" cy="4" r="2.5" fill="#7a9ad0"/><circle cx="4" cy="2.5" r="1.5" fill="#e0d050"/></svg>
<div class="a" style="left:1082px;top:479px;width:252px;height:1px;background:#5a5a5a"></div>
<div class="a" style="left:1082px;top:480px;width:252px;height:1px;background:#858585"></div>
<svg class="a" style="left:1090.5px;top:487.5px;" width="9" height="9" viewBox="0 0 9 9"><path d="M0 0.5L9 0.5L4.5 8.5Z" fill="#1e1e1e"/></svg>
<span class="t" style="left:1103px;top:487px;color:#000;font-size:12px;">Diffuse</span>
<svg class="a" style="left:1318px;top:491px;" width="12" height="6" viewBox="0 0 12 6"><rect x="0" y="0" width="1" height="1" fill="#3a3a3a"/><rect x="1" y="1" width="1" height="1" fill="#9a9a9a"/><rect x="0" y="3" width="1" height="1" fill="#3a3a3a"/><rect x="1" y="4" width="1" height="1" fill="#9a9a9a"/><rect x="3" y="0" width="1" height="1" fill="#3a3a3a"/><rect x="4" y="1" width="1" height="1" fill="#9a9a9a"/><rect x="3" y="3" width="1" height="1" fill="#3a3a3a"/><rect x="4" y="4" width="1" height="1" fill="#9a9a9a"/><rect x="6" y="0" width="1" height="1" fill="#3a3a3a"/><rect x="7" y="1" width="1" height="1" fill="#9a9a9a"/><rect x="6" y="3" width="1" height="1" fill="#3a3a3a"/><rect x="7" y="4" width="1" height="1" fill="#9a9a9a"/><rect x="9" y="0" width="1" height="1" fill="#3a3a3a"/><rect x="10" y="1" width="1" height="1" fill="#9a9a9a"/><rect x="9" y="3" width="1" height="1" fill="#3a3a3a"/><rect x="10" y="4" width="1" height="1" fill="#9a9a9a"/></svg>
<div class="a" style="left:1086px;top:512px;width:118px;height:20px;background:#3e3e3e;border:1px solid #262626;border-radius:4px"></div>
<div class="a w" style="left:1212px;top:512px;width:119px;height:20px;background:linear-gradient(#565656,#363636);border:1px solid #1a1a1a;border-radius:4px;"></div>
<span class="t" style="left:1220px;top:518px;color:#fff;font-size:11px;">Lambert</span>
<svg class="a" style="left:1321px;top:515px" width="7" height="14"><path d="M0.3 5.6L3.5 0.4L6.7 5.6Z M0.3 7.4L3.5 12.6L6.7 7.4Z" fill="#d0d0d0"/></svg>
<div class="a w" style="left:1086px;top:534px;width:118px;height:20px;background:linear-gradient(#a6a6a6,#bababa);border:1px solid #202020;border-radius:10.0px;overflow:hidden"><div class="a" style="left:0;top:0;width:95px;height:100%;background:linear-gradient(#6c6c6c,#8a8a8a)"></div></div>
<span class="t" style="left:1101.0px;top:539.5px;color:#000;font-size:11px;">Intensity:</span>
<span class="t" style="left:889.0px;top:539.5px;width:300px;text-align:right;color:#000;font-size:11px;">0.800</span>
<div class="a w" style="left:1215px;top:537px;width:14px;height:14px;background:linear-gradient(#565656,#383838);border:1px solid #1e1e1e;border-radius:3px;"></div>
<span class="t" style="left:1238px;top:540px;color:#000;font-size:11px;">Ramp</span>
<div class="a" style="left:1082px;top:566px;width:252px;height:1px;background:#5a5a5a"></div>
<div class="a" style="left:1082px;top:567px;width:252px;height:1px;background:#858585"></div>
<svg class="a" style="left:1090.5px;top:574.5px;" width="9" height="9" viewBox="0 0 9 9"><path d="M0 0.5L9 0.5L4.5 8.5Z" fill="#1e1e1e"/></svg>
<span class="t" style="left:1103px;top:574px;color:#000;font-size:12px;">Specular</span>
<svg class="a" style="left:1318px;top:578px;" width="12" height="6" viewBox="0 0 12 6"><rect x="0" y="0" width="1" height="1" fill="#3a3a3a"/><rect x="1" y="1" width="1" height="1" fill="#9a9a9a"/><rect x="0" y="3" width="1" height="1" fill="#3a3a3a"/><rect x="1" y="4" width="1" height="1" fill="#9a9a9a"/><rect x="3" y="0" width="1" height="1" fill="#3a3a3a"/><rect x="4" y="1" width="1" height="1" fill="#9a9a9a"/><rect x="3" y="3" width="1" height="1" fill="#3a3a3a"/><rect x="4" y="4" width="1" height="1" fill="#9a9a9a"/><rect x="6" y="0" width="1" height="1" fill="#3a3a3a"/><rect x="7" y="1" width="1" height="1" fill="#9a9a9a"/><rect x="6" y="3" width="1" height="1" fill="#3a3a3a"/><rect x="7" y="4" width="1" height="1" fill="#9a9a9a"/><rect x="9" y="0" width="1" height="1" fill="#3a3a3a"/><rect x="10" y="1" width="1" height="1" fill="#9a9a9a"/><rect x="9" y="3" width="1" height="1" fill="#3a3a3a"/><rect x="10" y="4" width="1" height="1" fill="#9a9a9a"/></svg>
<div class="a" style="left:1086px;top:599px;width:118px;height:20px;background:#ffffff;border:1px solid #262626;border-radius:4px"></div>
<div class="a w" style="left:1212px;top:599px;width:119px;height:20px;background:linear-gradient(#565656,#363636);border:1px solid #1a1a1a;border-radius:4px;"></div>
<span class="t" style="left:1220px;top:605px;color:#fff;font-size:11px;">CookTorr</span>
<svg class="a" style="left:1321px;top:602px" width="7" height="14"><path d="M0.3 5.6L3.5 0.4L6.7 5.6Z M0.3 7.4L3.5 12.6L6.7 7.4Z" fill="#d0d0d0"/></svg>
<div class="a w" style="left:1086px;top:621px;width:118px;height:20px;background:linear-gradient(#a6a6a6,#bababa);border:1px solid #202020;border-radius:10.0px;overflow:hidden"><div class="a" style="left:0;top:0;width:63px;height:100%;background:linear-gradient(#6c6c6c,#8a8a8a)"></div></div>
<span class="t" style="left:1101.0px;top:626.5px;color:#000;font-size:11px;">Intensity:</span>
<span class="t" style="left:889.0px;top:626.5px;width:300px;text-align:right;color:#000;font-size:11px;">0.500</span>
<div class="a w" style="left:1215px;top:624px;width:14px;height:14px;background:linear-gradient(#565656,#383838);border:1px solid #1e1e1e;border-radius:3px;"></div>
<span class="t" style="left:1238px;top:627px;color:#000;font-size:11px;">Ramp</span>
<div class="a w" style="left:1086px;top:646px;width:245px;height:20px;background:linear-gradient(#a2a2a2,#b6b6b6);border:1px solid #202020;border-radius:10px"></div>
<svg class="a" style="left:1092px;top:652px;" width="5" height="8" viewBox="0 0 5 8"><path d="M4 0.5L0.5 4L4 7.5Z" fill="#7a7a7a"/></svg>
<svg class="a" style="left:1320px;top:652px;" width="5" height="8" viewBox="0 0 5 8"><path d="M1 0.5L4.5 4L1 7.5Z" fill="#7a7a7a"/></svg>
<span class="t" style="left:1101px;top:652px;color:#000;font-size:11px;">Hardness:</span>
<span class="t" style="left:1015px;top:652px;width:300px;text-align:right;color:#000;font-size:11px;">50</span>
<div class="a" style="left:1082px;top:672px;width:252px;height:1px;background:#5a5a5a"></div>
<div class="a" style="left:1082px;top:673px;width:252px;height:1px;background:#858585"></div>
<svg class="a" style="left:1090.5px;top:681.5px;" width="9" height="9" viewBox="0 0 9 9"><path d="M0 0.5L9 0.5L4.5 8.5Z" fill="#1e1e1e"/></svg>
<span class="t" style="left:1103px;top:681px;color:#000;font-size:12px;">Shading</span>
<svg class="a" style="left:1318px;top:685px;" width="12" height="6" viewBox="0 0 12 6"><rect x="0" y="0" width="1" height="1" fill="#3a3a3a"/><rect x="1" y="1" width="1" height="1" fill="#9a9a9a"/><rect x="0" y="3" width="1" height="1" fill="#3a3a3a"/><rect x="1" y="4" width="1" height="1" fill="#9a9a9a"/><rect x="3" y="0" width="1" height="1" fill="#3a3a3a"/><rect x="4" y="1" width="1" height="1" fill="#9a9a9a"/><rect x="3" y="3" width="1" height="1" fill="#3a3a3a"/><rect x="4" y="4" width="1" height="1" fill="#9a9a9a"/><rect x="6" y="0" width="1" height="1" fill="#3a3a3a"/><rect x="7" y="1" width="1" height="1" fill="#9a9a9a"/><rect x="6" y="3" width="1" height="1" fill="#3a3a3a"/><rect x="7" y="4" width="1" height="1" fill="#9a9a9a"/><rect x="9" y="0" width="1" height="1" fill="#3a3a3a"/><rect x="10" y="1" width="1" height="1" fill="#9a9a9a"/><rect x="9" y="3" width="1" height="1" fill="#3a3a3a"/><rect x="10" y="4" width="1" height="1" fill="#9a9a9a"/></svg>
<div class="a" style="left:1339px;top:162px;width:13px;height:540px;background:#636363;border:1px solid #555;border-radius:6px"></div>
<div class="a" style="left:1340px;top:162px;width:11px;height:271px;background:linear-gradient(90deg,#8e8e8e,#a2a2a2,#8a8a8a);border:1px solid #4a4a4a;border-radius:6px"></div>
<svg class="a" style="left:1078px;top:686px;" width="12" height="12" viewBox="0 0 12 12"><line x1="0" y1="0" x2="12" y2="12" stroke="#3a3a3a" stroke-width="1.2"/><line x1="1.2" y1="0" x2="12" y2="10.8" stroke="#a8a8a8" stroke-width="1"/><line x1="4" y1="0" x2="12" y2="8" stroke="#3a3a3a" stroke-width="1.2"/><line x1="5.2" y1="0" x2="12" y2="6.8" stroke="#a8a8a8" stroke-width="1"/></svg>
</div>
<div class="a" style="left:0;top:0;width:1352px;height:698px;clip-path:inset(0px 0px 678px 0px)">
<div class="a" style="left:0px;top:0px;width:1352px;height:19px;background:#727272"></div>
<div class="a" style="left:0px;top:19px;width:1352px;height:1px;background:#0e0e0e"></div>
<div class="a w" style="left:5px;top:-4px;width:31px;height:21px;background:linear-gradient(#565656,#363636);border:1px solid #1a1a1a;border-radius:4px;"></div>
<svg class="a" style="left:9px;top:1px;" width="14" height="14" viewBox="0 0 14 14"><circle cx="7" cy="7" r="6.2" fill="#2c4f8c" stroke="#101830" stroke-width="1"/><circle cx="7" cy="7" r="5" fill="none" stroke="#8fb0e0" stroke-width="1"/><rect x="6" y="6" width="2.4" height="5" fill="#fff"/><circle cx="7.2" cy="4" r="1.3" fill="#fff"/></svg>
<svg class="a" style="left:26px;top:2px" width="7" height="14"><path d="M0.3 5.6L3.5 0.4L6.7 5.6Z M0.3 7.4L3.5 12.6L6.7 7.4Z" fill="#bdbdbd"/></svg>
<span class="t" style="left:48px;top:3px;color:#000;font-size:11px;">File</span>
<span class="t" style="left:86px;top:3px;color:#000;font-size:11px;">Render</span>
<span class="t" style="left:141px;top:3px;color:#000;font-size:11px;">Window</span>
<span class="t" style="left:201px;top:3px;color:#000;font-size:11px;">Help</span>
<div class="a w" style="left:237px;top:-4px;width:191px;height:21px;border:1px solid #1a1a1a;border-radius:4px;overflow:hidden;"><div class="a" style="left:-1px;top:-1px;width:33px;height:21px;background:linear-gradient(#565656,#363636);box-sizing:border-box"></div><div class="a" style="left:31px;top:-1px;width:119px;height:21px;background:linear-gradient(#9a9a9a,#b4b4b4);border-left:1px solid #1a1a1a;box-sizing:border-box"></div><div class="a" style="left:150px;top:-1px;width:20px;height:21px;background:linear-gradient(#a9a9a9,#8b8b8b);border-left:1px solid #1a1a1a;box-sizing:border-box"></div><div class="a" style="left:170px;top:-1px;width:20px;height:21px;background:linear-gradient(#a9a9a9,#8b8b8b);border-left:1px solid #1a1a1a;box-sizing:border-box"></div></div>
<svg class="a" style="left:243px;top:2px;" width="12" height="12" viewBox="0 0 12 12"><rect x="0.5" y="0.5" width="11" height="11" fill="#fff" stroke="#222"/><rect x="1.5" y="1.5" width="4" height="4" fill="#333"/><rect x="1.5" y="6.5" width="4" height="4" fill="#333"/><rect x="6.5" y="1.5" width="4" height="9" fill="#ddd"/></svg>
<svg class="a" style="left:259px;top:2px" width="7" height="14"><path d="M0.3 5.6L3.5 0.4L6.7 5.6Z M0.3 7.4L3.5 12.6L6.7 7.4Z" fill="#bdbdbd"/></svg>
<span class="t" style="left:276px;top:3px;color:#000;font-size:11px;">Default</span>
<svg class="a" style="left:388px;top:0px;" width="20" height="16" viewBox="0 0 20 16"><path d="M10.0 2.5V13.5M4.5 8.0H15.5" stroke="#1a1a1a" stroke-width="3.6"/><path d="M10.0 3.5V12.5M5.5 8.0H14.5" stroke="#f2f2f2" stroke-width="1.8"/></svg>
<svg class="a" style="left:408px;top:0px;" width="20" height="16" viewBox="0 0 20 16"><path d="M5.5 3.5L14.5 12.5M14.5 3.5L5.5 12.5" stroke="#1a1a1a" stroke-width="3.4"/><path d="M6.0 4.0L14.0 12.0M14.0 4.0L6.0 12.0" stroke="#f2f2f2" stroke-width="1.7"/></svg>
<div class="a w" style="left:434px;top:-4px;width:191px;height:21px;border:1px solid #1a1a1a;border-radius:4px;overflow:hidden;"><div class="a" style="left:-1px;top:-1px;width:33px;height:21px;background:linear-gradient(#565656,#363636);box-sizing:border-box"></div><div class="a" style="left:31px;top:-1px;width:119px;height:21px;background:linear-gradient(#9a9a9a,#b4b4b4);border-left:1px solid #1a1a1a;box-sizing:border-box"></div><div class="a" style="left:150px;top:-1px;width:20px;height:21px;background:linear-gradient(#a9a9a9,#8b8b8b);border-left:1px solid #1a1a1a;box-sizing:border-box"></div><div class="a" style="left:170px;top:-1px;width:20px;height:21px;background:linear-gradient(#a9a9a9,#8b8b8b);border-left:1px solid #1a1a1a;box-sizing:border-box"></div></div>
<svg class="a" style="left:439px;top:1px;" width="16" height="16" viewBox="0 0 16 16"><circle cx="3" cy="3" r="2" fill="#d8e05a" stroke="#4a4a10" stroke-width="0.6"/><rect x="8" y="2" width="5" height="10" rx="2" fill="#3b6fc4" stroke="#10204a" stroke-width="0.8"/><circle cx="6" cy="11" r="3.6" fill="#e8e8e8" stroke="#202020" stroke-width="0.8"/></svg>
<svg class="a" style="left:456px;top:2px" width="7" height="14"><path d="M0.3 5.6L3.5 0.4L6.7 5.6Z M0.3 7.4L3.5 12.6L6.7 7.4Z" fill="#bdbdbd"/></svg>
<span class="t" style="left:473px;top:3px;color:#000;font-size:11px;">Scene</span>
<svg class="a" style="left:585px;top:0px;" width="20" height="16" viewBox="0 0 20 16"><path d="M10.0 2.5V13.5M4.5 8.0H15.5" stroke="#1a1a1a" stroke-width="3.6"/><path d="M10.0 3.5V12.5M5.5 8.0H14.5" stroke="#f2f2f2" stroke-width="1.8"/></svg>
<svg class="a" style="left:605px;top:0px;" width="20" height="16" viewBox="0 0 20 16"><path d="M5.5 3.5L14.5 12.5M14.5 3.5L5.5 12.5" stroke="#1a1a1a" stroke-width="3.4"/><path d="M6.0 4.0L14.0 12.0M14.0 4.0L6.0 12.0" stroke="#f2f2f2" stroke-width="1.7"/></svg>
<div class="a w" style="left:642px;top:-4px;width:110px;height:21px;background:linear-gradient(#565656,#363636);border:1px solid #1a1a1a;border-radius:4px;"></div>
<span class="t" style="left:650px;top:3px;color:#fff;font-size:11px;">Blender Render</span>
<svg class="a" style="left:743px;top:2px" width="7" height="14"><path d="M0.3 5.6L3.5 0.4L6.7 5.6Z M0.3 7.4L3.5 12.6L6.7 7.4Z" fill="#c8c8c8"/></svg>
<svg class="a" style="left:771px;top:1px;" width="16" height="15" viewBox="0 0 16 15"><path d="M1 9 L7 4 L3 4 L4 2.5 L10 2.5 L14 6 A5 5 0 1 1 5 11 L2 12 Z" fill="#e87d0d" stroke="#3a1a00" stroke-width="0.6"/><circle cx="10" cy="9" r="3.2" fill="#fff"/><circle cx="10" cy="9" r="1.8" fill="#2b5aa0"/></svg>
<span class="t" style="left:797px;top:3px;color:#000;font-size:11px;letter-spacing:0.22px">v2.79 | Verts:184 | Faces:110 | Tris:220 | Objects:1/12 | Lamps:0/0 | Mem:39.84M | Cube.009</span>
<svg class="a" style="left:0px;top:10px;" width="9" height="9" viewBox="0 0 9 9"><line x1="0" y1="0" x2="9" y2="9" stroke="#3a3a3a" stroke-width="1.2"/><line x1="1.2" y1="0" x2="9" y2="7.8" stroke="#a8a8a8" stroke-width="1"/><line x1="4" y1="0" x2="9" y2="5" stroke="#3a3a3a" stroke-width="1.2"/><line x1="5.2" y1="0" x2="9" y2="3.8" stroke="#a8a8a8" stroke-width="1"/></svg>
</div>
<div class="a" style="left:1077px;top:20px;width:1px;height:678px;background:#0e0e0e"></div></body></html>
